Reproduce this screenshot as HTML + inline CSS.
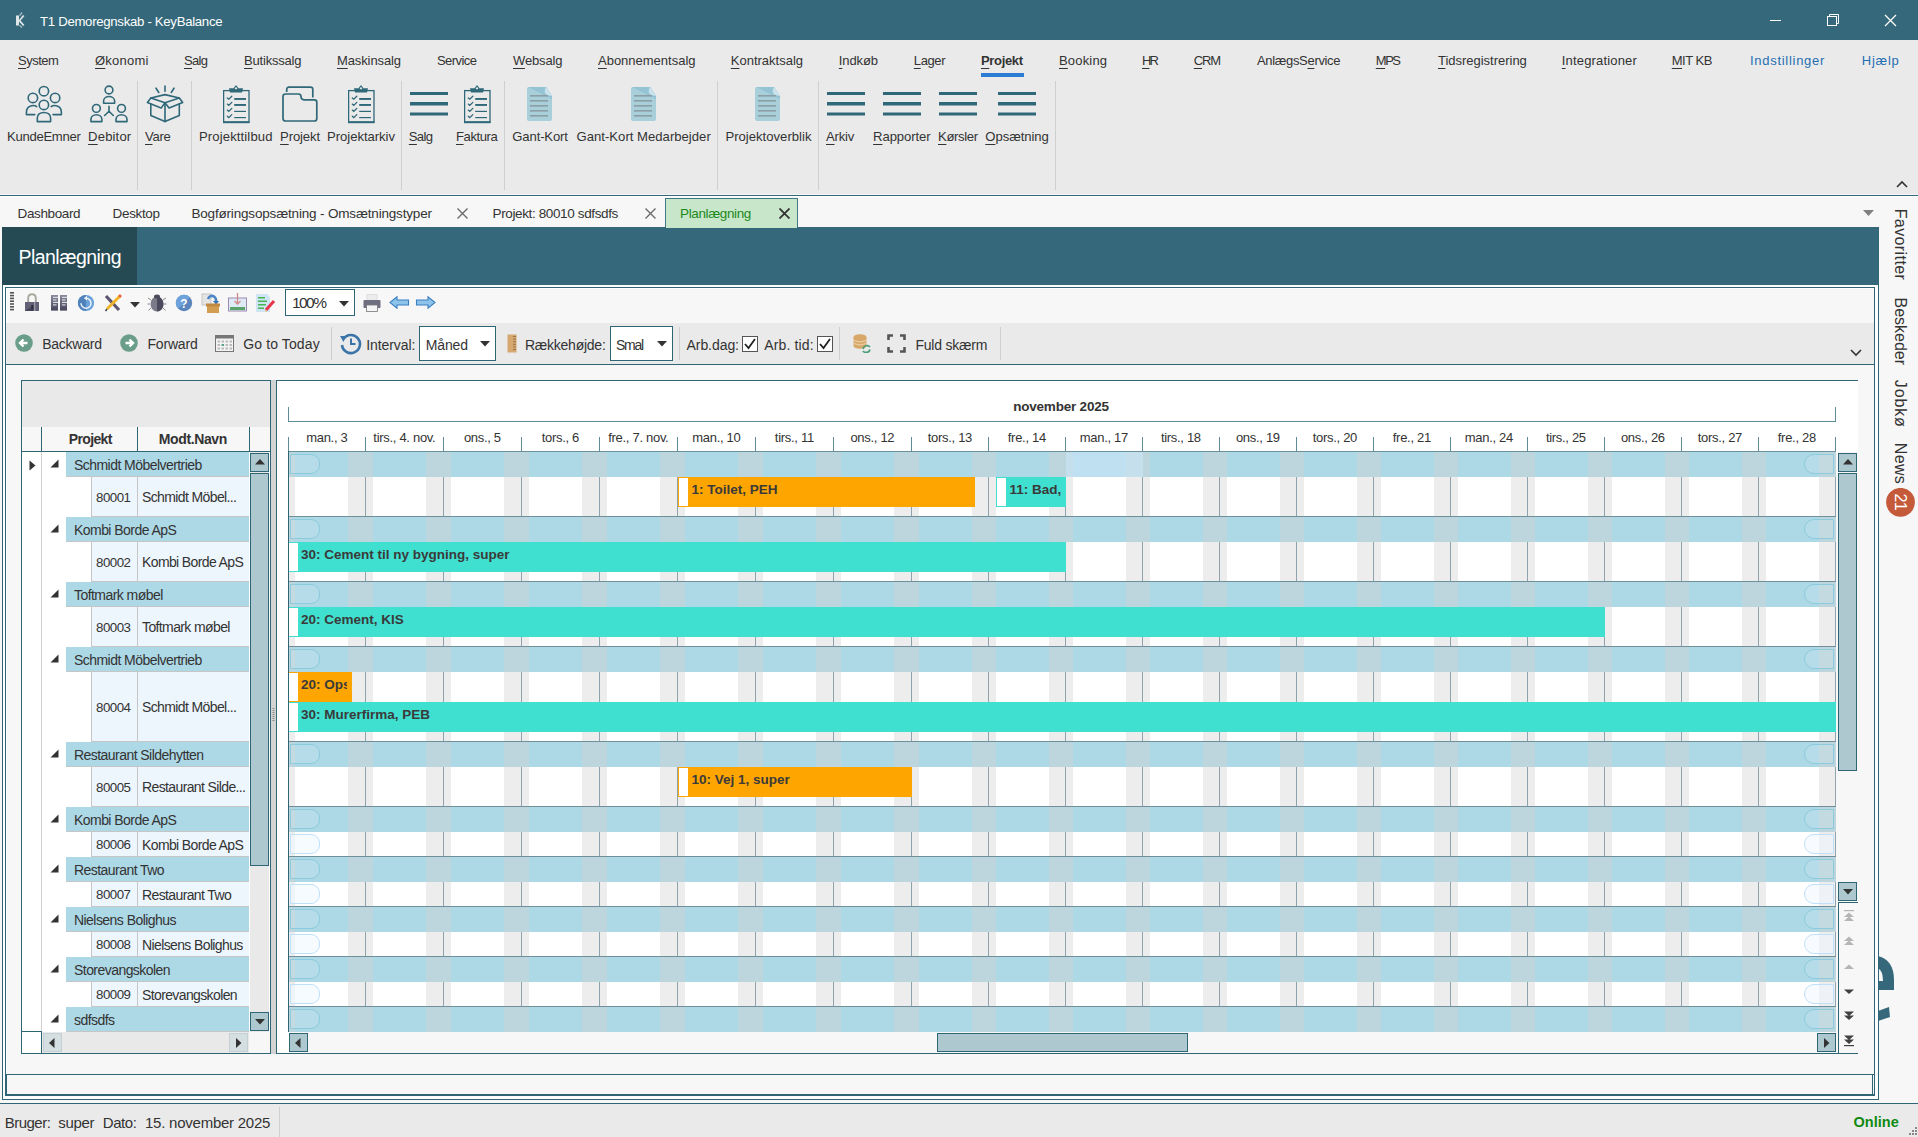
<!DOCTYPE html><html><head><meta charset="utf-8"><style>
html,body{margin:0;padding:0;}
body{width:1918px;height:1137px;position:relative;overflow:hidden;background:#f7f7f7;font-family:"Liberation Sans",sans-serif;}
body div{position:absolute;}
.t{position:absolute;white-space:nowrap;line-height:1;font-family:"Liberation Sans",sans-serif;}
u{text-decoration:underline;text-underline-offset:2.5px;text-decoration-thickness:1px;}
</style></head><body>
<div style="left:0px;top:0px;width:1918px;height:40px;background:#35687a;"></div>
<svg style="position:absolute;left:12px;top:11px;filter:blur(0.35px)" width="14" height="18" viewBox="0 0 14 18"><g fill="#dfe6e8"><path d="M4 4.5 L7 4.5 L7 9 L11 4 L12.5 5 L8.5 9.5 L12.5 14 L11 15 L7 10.5 L7 14.5 L4 14.5 Z"/><path d="M7 4.5 L9.5 1 L10.5 2 L8 5Z" opacity="0.7"/><path d="M7 14.5 L9.5 17 L10.5 16 L8 14Z" opacity="0.7"/></g></svg>
<span class="t" style="left:40.00px;top:14.78px;font-size:13.2px;letter-spacing:-0.298px;color:#ffffff;">T1 Demoregnskab - KeyBalance</span>
<div style="left:1770px;top:20px;width:11px;height:1px;background:#ffffff;"></div>
<svg style="position:absolute;left:1826px;top:13px;" width="14" height="14" viewBox="0 0 14 14"><rect x="1.5" y="3.5" width="9" height="9" fill="none" stroke="#fff" stroke-width="1"/><path d="M3.5 3.5 V1.5 H12.5 V10.5 H10.5" fill="none" stroke="#fff" stroke-width="1"/></svg>
<svg style="position:absolute;left:1884px;top:14px;" width="13" height="13" viewBox="0 0 13 13"><path d="M1 1 L12 12 M12 1 L1 12" stroke="#fff" stroke-width="1.3"/></svg>
<div style="left:0px;top:40px;width:1918px;height:154px;background:#eaeaea;"></div>
<span class="t" style="left:18.00px;top:53.75px;font-size:13px;letter-spacing:-0.508px;color:#333333;"><u>S</u>ystem</span>
<span class="t" style="left:95.00px;top:53.75px;font-size:13px;letter-spacing:0.231px;color:#333333;"><u>Ø</u>konomi</span>
<span class="t" style="left:184.00px;top:53.75px;font-size:13px;letter-spacing:-0.673px;color:#333333;"><u>S</u>alg</span>
<span class="t" style="left:244.00px;top:53.75px;font-size:13px;letter-spacing:-0.194px;color:#333333;"><u>B</u>utikssalg</span>
<span class="t" style="left:337.00px;top:53.75px;font-size:13px;letter-spacing:-0.114px;color:#333333;"><u>M</u>askinsalg</span>
<span class="t" style="left:437.00px;top:53.75px;font-size:13px;letter-spacing:-0.558px;color:#333333;">Service</span>
<span class="t" style="left:513.00px;top:53.75px;font-size:13px;letter-spacing:-0.140px;color:#333333;"><u>W</u>ebsalg</span>
<span class="t" style="left:598.00px;top:53.75px;font-size:13px;letter-spacing:-0.005px;color:#333333;"><u>A</u>bonnementsalg</span>
<span class="t" style="left:730.80px;top:53.75px;font-size:13px;letter-spacing:-0.005px;color:#333333;"><u>K</u>ontraktsalg</span>
<span class="t" style="left:838.80px;top:53.75px;font-size:13px;letter-spacing:-0.108px;color:#333333;"><u>I</u>ndkøb</span>
<span class="t" style="left:913.80px;top:53.75px;font-size:13px;letter-spacing:-0.386px;color:#333333;"><u>L</u>ager</span>
<span class="t" style="left:981.00px;top:53.75px;font-size:13px;letter-spacing:-0.345px;color:#333333;font-weight:bold;"><u>P</u>rojekt</span>
<span class="t" style="left:1059.00px;top:53.75px;font-size:13px;letter-spacing:0.171px;color:#333333;"><u>B</u>ooking</span>
<span class="t" style="left:1142.00px;top:53.75px;font-size:13px;letter-spacing:-1.977px;color:#333333;"><u>H</u>R</span>
<span class="t" style="left:1193.80px;top:53.75px;font-size:13px;letter-spacing:-1.203px;color:#333333;"><u>C</u>RM</span>
<span class="t" style="left:1257.00px;top:53.75px;font-size:13px;letter-spacing:-0.327px;color:#333333;">AnlægsS<u>e</u>rvice</span>
<span class="t" style="left:1375.80px;top:53.75px;font-size:13px;letter-spacing:-1.486px;color:#333333;"><u>M</u>PS</span>
<span class="t" style="left:1438.00px;top:53.75px;font-size:13px;letter-spacing:-0.020px;color:#333333;"><u>T</u>idsregistrering</span>
<span class="t" style="left:1561.80px;top:53.75px;font-size:13px;letter-spacing:0.168px;color:#333333;"><u>I</u>ntegrationer</span>
<span class="t" style="left:1671.80px;top:53.75px;font-size:13px;letter-spacing:-0.520px;color:#333333;"><u>M</u>IT KB</span>
<span class="t" style="left:1750.00px;top:53.75px;font-size:13px;letter-spacing:0.712px;color:#1f6fb2;">Indstillinger</span>
<span class="t" style="left:1861.80px;top:53.75px;font-size:13px;letter-spacing:0.761px;color:#1f6fb2;">Hjælp</span>
<div style="left:981px;top:73px;width:43px;height:4px;background:#2b7cd3;"></div>
<div style="left:137px;top:81px;width:1px;height:109px;background:#cfcfcf;"></div>
<div style="left:191px;top:81px;width:1px;height:109px;background:#cfcfcf;"></div>
<div style="left:401px;top:81px;width:1px;height:109px;background:#cfcfcf;"></div>
<div style="left:504px;top:81px;width:1px;height:109px;background:#cfcfcf;"></div>
<div style="left:717px;top:81px;width:1px;height:109px;background:#cfcfcf;"></div>
<div style="left:818px;top:81px;width:1px;height:109px;background:#cfcfcf;"></div>
<div style="left:1055px;top:81px;width:1px;height:109px;background:#cfcfcf;"></div>
<span class="t" style="left:7.00px;top:129.87px;font-size:13.1px;letter-spacing:-0.295px;color:#333333;">KundeEmner</span>
<span class="t" style="left:88.10px;top:129.87px;font-size:13.1px;letter-spacing:0.145px;color:#333333;"><u>D</u>ebitor</span>
<span class="t" style="left:145.00px;top:129.87px;font-size:13.1px;letter-spacing:-0.266px;color:#333333;"><u>V</u>are</span>
<span class="t" style="left:199.00px;top:129.87px;font-size:13.1px;letter-spacing:0.118px;color:#333333;">Projekttilbud</span>
<span class="t" style="left:280.10px;top:129.87px;font-size:13.1px;letter-spacing:-0.128px;color:#333333;"><u>P</u>rojekt</span>
<span class="t" style="left:327.10px;top:129.87px;font-size:13.1px;letter-spacing:-0.048px;color:#333333;">Projektarkiv</span>
<span class="t" style="left:408.80px;top:129.87px;font-size:13.1px;letter-spacing:-0.673px;color:#333333;"><u>S</u>alg</span>
<span class="t" style="left:456.00px;top:129.87px;font-size:13.1px;letter-spacing:-0.451px;color:#333333;"><u>F</u>aktura</span>
<span class="t" style="left:512.30px;top:129.87px;font-size:13.1px;letter-spacing:-0.136px;color:#333333;">Gant-Kort</span>
<span class="t" style="left:576.50px;top:129.87px;font-size:13.1px;letter-spacing:0.017px;color:#333333;">Gant-Kort Medarbejder</span>
<span class="t" style="left:725.40px;top:129.87px;font-size:13.1px;letter-spacing:0.014px;color:#333333;">Projektoverblik</span>
<span class="t" style="left:826.00px;top:129.87px;font-size:13.1px;letter-spacing:-0.228px;color:#333333;"><u>A</u>rkiv</span>
<span class="t" style="left:873.10px;top:129.87px;font-size:13.1px;letter-spacing:-0.081px;color:#333333;"><u>R</u>apporter</span>
<span class="t" style="left:938.00px;top:129.87px;font-size:13.1px;letter-spacing:-0.368px;color:#333333;"><u>K</u>ørsler</span>
<span class="t" style="left:985.30px;top:129.87px;font-size:13.1px;letter-spacing:-0.060px;color:#333333;"><u>O</u>psætning</span>
<svg style="position:absolute;left:24px;top:84px;" width="42" height="40" viewBox="0 0 42 40"><g fill="none" stroke="#2f6878" stroke-width="1.6" stroke-linejoin="round" stroke-linecap="round"><circle cx="19.9" cy="7.2" r="4.7"/><circle cx="8.9" cy="13.9" r="4.7"/><circle cx="31.1" cy="13.9" r="4.7"/><circle cx="19.9" cy="20.9" r="4.7"/><path d="M12.6 22.6 C10.5 20.8 2.4 20.6 2.4 28.5 V30.6 H10.8"/><path d="M27.2 22.6 C29.3 20.8 37.4 20.6 37.4 28.5 V30.6 H29"/><path d="M13.3 37.6 V34 C13.3 30.6 16 28.5 19.9 28.5 C23.8 28.5 26.6 30.6 26.6 34 V37.6 Z"/></g></svg>
<svg style="position:absolute;left:85px;top:80px;" width="50" height="48" viewBox="0 0 50 48"><g fill="none" stroke="#2f6878" stroke-width="1.6" stroke-linejoin="round" stroke-linecap="round"><circle cx="24" cy="10" r="3.9"/><path d="M18.6 23.2 V21 C18.6 18.4 21 16.5 24 16.5 C27 16.5 29.6 18.4 29.6 21 V23.2 Z"/><circle cx="11.4" cy="28.4" r="3.9"/><path d="M5.9 41.6 V39.5 C5.9 36.8 8.3 34.8 11.4 34.8 C14.5 34.8 16.9 36.8 16.9 39.5 V41.6 Z"/><circle cx="36.5" cy="28.4" r="3.9"/><path d="M31 41.6 V39.5 C31 36.8 33.4 34.8 36.5 34.8 C39.6 34.8 42 36.8 42 39.5 V41.6 Z"/><path d="M24 26.4 V31.2 L19.6 35.5 M24 31.2 L28.3 35.5"/></g></svg>
<svg style="position:absolute;left:140px;top:80px;" width="50" height="48" viewBox="0 0 50 48"><g fill="none" stroke="#2f6878" stroke-width="1.6" stroke-linejoin="round" stroke-linecap="round"><path d="M16 8.2 L18.8 12.5 M25 6 V11.3 M34 8.2 L31.25 12.5"/><path d="M10.8 18 L25 14.6 L39.3 18 L25 22.8 Z"/><path d="M10.8 18 L7.4 22.6 L21.1 28.1 L25 22.8"/><path d="M39.3 18 L42.7 22.6 L29.1 28.1 L25 22.8"/><path d="M10.8 23.9 V35.5 L25 41.6 L39.3 35.5 V23.9"/><path d="M25 22.8 V41.6"/></g></svg>
<svg style="position:absolute;left:223px;top:84px;" width="28" height="40" viewBox="0 0 28 40"><g><rect x="0.6" y="6.6" width="25.4" height="31.4" fill="none" stroke="#2f6878" stroke-width="1.3"/><rect x="0" y="37.4" width="26.6" height="1.8" fill="#2f6878"/><path d="M6 4.2 H20 L19 8.6 H7 Z" fill="#2f6878"/><path d="M10.3 4.4 L13 0.9 L15.7 4.4 Z" fill="#2f6878"/><circle cx="13" cy="4.3" r="1.1" fill="#eaeaea"/><g stroke="#2f6878" stroke-width="1.3" fill="none" stroke-linecap="round"><path d="M4.3 13.9 L5.8 15.2 L8.8 12.2"/><path d="M4.3 20.1 L5.8 21.4 L8.8 18.4"/><path d="M4.3 26.1 L5.8 27.4 L8.8 24.4"/><path d="M4.3 32.3 L5.8 33.6 L8.8 30.6"/></g><g fill="#2f6878"><rect x="11.2" y="14" width="11.8" height="1.9"/><rect x="11.2" y="20" width="11.8" height="1.9"/><rect x="11.2" y="26.8" width="11.8" height="1.2"/><rect x="11.2" y="33" width="11.8" height="1.2"/></g></g></svg>
<svg style="position:absolute;left:348px;top:84px;" width="28" height="40" viewBox="0 0 28 40"><g><rect x="0.6" y="6.6" width="25.4" height="31.4" fill="none" stroke="#2f6878" stroke-width="1.3"/><rect x="0" y="37.4" width="26.6" height="1.8" fill="#2f6878"/><path d="M6 4.2 H20 L19 8.6 H7 Z" fill="#2f6878"/><path d="M10.3 4.4 L13 0.9 L15.7 4.4 Z" fill="#2f6878"/><circle cx="13" cy="4.3" r="1.1" fill="#eaeaea"/><g stroke="#2f6878" stroke-width="1.3" fill="none" stroke-linecap="round"><path d="M4.3 13.9 L5.8 15.2 L8.8 12.2"/><path d="M4.3 20.1 L5.8 21.4 L8.8 18.4"/><path d="M4.3 26.1 L5.8 27.4 L8.8 24.4"/><path d="M4.3 32.3 L5.8 33.6 L8.8 30.6"/></g><g fill="#2f6878"><rect x="11.2" y="14" width="11.8" height="1.9"/><rect x="11.2" y="20" width="11.8" height="1.9"/><rect x="11.2" y="26.8" width="11.8" height="1.2"/><rect x="11.2" y="33" width="11.8" height="1.2"/></g></g></svg>
<svg style="position:absolute;left:464px;top:84px;" width="28" height="40" viewBox="0 0 28 40"><g><rect x="0.6" y="6.6" width="25.4" height="31.4" fill="none" stroke="#2f6878" stroke-width="1.3"/><rect x="0" y="37.4" width="26.6" height="1.8" fill="#2f6878"/><path d="M6 4.2 H20 L19 8.6 H7 Z" fill="#2f6878"/><path d="M10.3 4.4 L13 0.9 L15.7 4.4 Z" fill="#2f6878"/><circle cx="13" cy="4.3" r="1.1" fill="#eaeaea"/><g stroke="#2f6878" stroke-width="1.3" fill="none" stroke-linecap="round"><path d="M4.3 13.9 L5.8 15.2 L8.8 12.2"/><path d="M4.3 20.1 L5.8 21.4 L8.8 18.4"/><path d="M4.3 26.1 L5.8 27.4 L8.8 24.4"/><path d="M4.3 32.3 L5.8 33.6 L8.8 30.6"/></g><g fill="#2f6878"><rect x="11.2" y="14" width="11.8" height="1.9"/><rect x="11.2" y="20" width="11.8" height="1.9"/><rect x="11.2" y="26.8" width="11.8" height="1.2"/><rect x="11.2" y="33" width="11.8" height="1.2"/></g></g></svg>
<svg style="position:absolute;left:281px;top:85px;" width="38" height="38" viewBox="0 0 38 38"><g fill="none" stroke="#2f6878" stroke-width="1.7" stroke-linejoin="round"><path d="M5.7 7 V4.5 Q5.7 2.2 8 2.2 H29.5 Q31.8 2.2 31.8 4.5 V12.5"/><path d="M2 11.5 Q2 9 4.5 9 H17.5 Q20 9 20 11.5 Q20 14.8 23 14.8 H33.5 Q35.8 14.8 35.8 17.2 V33.5 Q35.8 36 33.5 36 H4.5 Q2 36 2 33.5 Z"/></g></svg>
<svg style="position:absolute;left:410px;top:91px;" width="38" height="27" viewBox="0 0 38 27"><g fill="#2f6878"><rect x="0" y="1" width="38" height="3"/><rect x="0" y="11" width="38" height="3.5"/><rect x="0" y="21.5" width="38" height="3"/></g></svg>
<svg style="position:absolute;left:827px;top:91px;" width="38" height="27" viewBox="0 0 38 27"><g fill="#2f6878"><rect x="0" y="1" width="38" height="3"/><rect x="0" y="11" width="38" height="3.5"/><rect x="0" y="21.5" width="38" height="3"/></g></svg>
<svg style="position:absolute;left:883px;top:91px;" width="38" height="27" viewBox="0 0 38 27"><g fill="#2f6878"><rect x="0" y="1" width="38" height="3"/><rect x="0" y="11" width="38" height="3.5"/><rect x="0" y="21.5" width="38" height="3"/></g></svg>
<svg style="position:absolute;left:939px;top:91px;" width="38" height="27" viewBox="0 0 38 27"><g fill="#2f6878"><rect x="0" y="1" width="38" height="3"/><rect x="0" y="11" width="38" height="3.5"/><rect x="0" y="21.5" width="38" height="3"/></g></svg>
<svg style="position:absolute;left:998px;top:91px;" width="38" height="27" viewBox="0 0 38 27"><g fill="#2f6878"><rect x="0" y="1" width="38" height="3"/><rect x="0" y="11" width="38" height="3.5"/><rect x="0" y="21.5" width="38" height="3"/></g></svg>
<svg style="position:absolute;left:526px;top:86px;" width="27" height="36" viewBox="0 0 27 36"><path d="M2 1 H20 L26 10 V33 Q26 35 24 35 H3 Q1 35 1 33 V3 Q1 1 3 1 Z" fill="#a9cfdb"/><path d="M2 1 H20 L26 10 V13 Z" fill="#8fc1d2" opacity="0.8"/><path d="M20 1 Q17 6 21 9 L26 10 Z" fill="#c8e3ec"/><g fill="#8a9ea4"><rect x="4" y="9" width="18" height="1.6"/><rect x="4" y="14" width="18" height="1.6"/><rect x="4" y="19" width="18" height="1.6"/><rect x="4" y="24" width="18" height="1.6"/><rect x="4" y="29" width="18" height="1.6"/></g></svg>
<svg style="position:absolute;left:630px;top:86px;" width="27" height="36" viewBox="0 0 27 36"><path d="M2 1 H20 L26 10 V33 Q26 35 24 35 H3 Q1 35 1 33 V3 Q1 1 3 1 Z" fill="#a9cfdb"/><path d="M2 1 H20 L26 10 V13 Z" fill="#8fc1d2" opacity="0.8"/><path d="M20 1 Q17 6 21 9 L26 10 Z" fill="#c8e3ec"/><g fill="#8a9ea4"><rect x="4" y="9" width="18" height="1.6"/><rect x="4" y="14" width="18" height="1.6"/><rect x="4" y="19" width="18" height="1.6"/><rect x="4" y="24" width="18" height="1.6"/><rect x="4" y="29" width="18" height="1.6"/></g></svg>
<svg style="position:absolute;left:754px;top:86px;" width="27" height="36" viewBox="0 0 27 36"><path d="M2 1 H20 L26 10 V33 Q26 35 24 35 H3 Q1 35 1 33 V3 Q1 1 3 1 Z" fill="#a9cfdb"/><path d="M2 1 H20 L26 10 V13 Z" fill="#8fc1d2" opacity="0.8"/><path d="M20 1 Q17 6 21 9 L26 10 Z" fill="#c8e3ec"/><g fill="#8a9ea4"><rect x="4" y="9" width="18" height="1.6"/><rect x="4" y="14" width="18" height="1.6"/><rect x="4" y="19" width="18" height="1.6"/><rect x="4" y="24" width="18" height="1.6"/><rect x="4" y="29" width="18" height="1.6"/></g></svg>
<div style="left:0px;top:195px;width:1918px;height:1px;background:#35687a;"></div>
<div style="left:0px;top:196px;width:1918px;height:1px;background:#ffffff;"></div>
<svg style="position:absolute;left:1896px;top:180px;" width="12" height="8" viewBox="0 0 12 8"><path d="M1 7 L6 2 L11 7" fill="none" stroke="#333" stroke-width="1.6"/></svg>
<div style="left:0px;top:197px;width:1918px;height:31px;background:#f7f7f7;"></div>
<span class="t" style="left:17.50px;top:206.83px;font-size:13.5px;letter-spacing:-0.367px;color:#333;">Dashboard</span>
<span class="t" style="left:112.60px;top:206.83px;font-size:13.5px;letter-spacing:-0.354px;color:#333;">Desktop</span>
<span class="t" style="left:191.40px;top:206.83px;font-size:13.5px;letter-spacing:-0.173px;color:#333;">Bogføringsopsætning - Omsætningstyper</span>
<svg style="position:absolute;left:457px;top:208px;" width="11" height="11" viewBox="0 0 11 11"><path d="M0.5 0.5 L10.5 10.5 M10.5 0.5 L0.5 10.5" stroke="#6b6b6b" stroke-width="1.4"/></svg>
<span class="t" style="left:492.50px;top:206.83px;font-size:13.5px;letter-spacing:-0.370px;color:#333;">Projekt: 80010 sdfsdfs</span>
<svg style="position:absolute;left:644.5px;top:208px;" width="11" height="11" viewBox="0 0 11 11"><path d="M0.5 0.5 L10.5 10.5 M10.5 0.5 L0.5 10.5" stroke="#6b6b6b" stroke-width="1.4"/></svg>
<div style="left:665px;top:198px;width:133px;height:30px;background:#c8e6c9;border:1px solid #3d7a86;border-bottom:none;box-sizing:border-box;"></div>
<span class="t" style="left:680.00px;top:206.83px;font-size:13.5px;letter-spacing:-0.375px;color:#1b8a1b;">Planlægning</span>
<svg style="position:absolute;left:778.5px;top:208px;" width="11" height="11" viewBox="0 0 11 11"><path d="M0.5 0.5 L10.5 10.5 M10.5 0.5 L0.5 10.5" stroke="#333" stroke-width="1.8"/></svg>
<svg style="position:absolute;left:1863px;top:210px;" width="12" height="7" viewBox="0 0 12 7"><path d="M0 0 H11 L5.5 6 Z" fill="#808080"/></svg>
<span class="t" style="left:1862.90px;top:234.82px;width:91.19999999999999px;font-size:16px;letter-spacing:0.404px;color:#333;transform-origin:35.60px 9.28px;transform:rotate(90deg);">Favoritter</span>
<span class="t" style="left:1864.75px;top:321.87px;width:87.5px;font-size:16px;letter-spacing:-0.013px;color:#333;transform-origin:33.75px 9.28px;transform:rotate(90deg);">Beskeder</span>
<span class="t" style="left:1875.00px;top:393.82px;width:67.0px;font-size:16px;letter-spacing:0.858px;color:#333;transform-origin:23.50px 9.28px;transform:rotate(90deg);">Jobkø</span>
<span class="t" style="left:1877.95px;top:454.07px;width:61.099999999999966px;font-size:16px;letter-spacing:0.364px;color:#333;transform-origin:20.55px 9.28px;transform:rotate(90deg);">News</span>
<svg style="position:absolute;left:1886px;top:488px;" width="30" height="30" viewBox="0 0 30 30"><circle cx="14.5" cy="14.3" r="14.4" fill="#c45a3a"/></svg>
<span class="t" style="left:1889.5px;top:495px;font-size:16px;color:#fff;transform-origin:9.5px 8px;transform:rotate(90deg);width:19px;letter-spacing:-0.6px">21</span>
<svg style="position:absolute;left:1878px;top:955px;" width="20" height="68" viewBox="0 0 20 68"><path d="M0 1 Q16 5 16 25 V35 H0 V26 H5 Q5 16 0 13 Z" fill="#35687a"/><path d="M0 56 L11 52 L12 62 L0 66 Z" fill="#35687a"/></svg>
<div style="left:2px;top:227px;width:1877px;height:58px;background:#35687a;"></div>
<div style="left:2px;top:227px;width:135px;height:58px;background:#254a53;"></div>
<span class="t" style="left:18.50px;top:248.23px;font-size:19.5px;letter-spacing:-0.541px;color:#ffffff;">Planlægning</span>
<div style="left:666px;top:227px;width:131px;height:1px;background:#c8e6c9;"></div>
<div style="left:2px;top:285px;width:1877px;height:815px;background:#ffffff;border:1px solid #2f6676;border-top:none;box-sizing:border-box;"></div>
<div style="left:5px;top:287px;width:1870px;height:809px;background:#f7f7f7;border:1px solid #2f6676;border-bottom:2px solid #2f6676;box-sizing:border-box;box-shadow:inset 1px 1px 0 #fff;"></div>
<div style="left:6px;top:323px;width:1868px;height:41px;background:#eaeaea;"></div>
<div style="left:6px;top:364px;width:1868px;height:1px;background:#2f6676;"></div>
<div style="left:6px;top:1074px;width:1868px;height:1px;background:#2f6676;"></div>
<div style="left:6px;top:1075px;width:1px;height:20px;background:#2f6676;"></div>
<div style="left:1872px;top:1075px;width:1px;height:20px;background:#2f6676;"></div>
<div style="left:0px;top:1103px;width:1918px;height:1px;background:#2f6676;"></div>
<div style="left:0px;top:1104px;width:1918px;height:33px;background:#eaeaea;"></div>
<span class="t" style="left:4.70px;top:1115.05px;font-size:15px;letter-spacing:-0.514px;color:#333;">Bruger:</span>
<span class="t" style="left:58.20px;top:1115.05px;font-size:15px;letter-spacing:-0.280px;color:#333;">super</span>
<span class="t" style="left:102.80px;top:1115.05px;font-size:15px;letter-spacing:-0.462px;color:#333;">Dato:</span>
<span class="t" style="left:145.00px;top:1115.05px;font-size:15px;letter-spacing:-0.240px;color:#333;">15. november 2025</span>
<div style="left:279px;top:1107px;width:1px;height:30px;background:#cfcfcf;"></div>
<span class="t" style="left:1853.50px;top:1115.08px;font-size:14.5px;letter-spacing:0.018px;color:#118a11;font-weight:bold;">Online</span>
<svg style="position:absolute;left:1906px;top:1126px;" width="12" height="11" viewBox="0 0 12 11"><g fill="#888"><rect x="9" y="1" width="2" height="2"/><rect x="6" y="4" width="2" height="2"/><rect x="9" y="4" width="2" height="2"/><rect x="3" y="7" width="2" height="2"/><rect x="6" y="7" width="2" height="2"/><rect x="9" y="7" width="2" height="2"/></g></svg>
<svg style="position:absolute;left:10px;top:292px;" width="5" height="21" viewBox="0 0 5 21"><g fill="#555"><rect x="0" y="0.0" width="4" height="1.6"/><rect x="0" y="2.8" width="4" height="1.6"/><rect x="0" y="5.6" width="4" height="1.6"/><rect x="0" y="8.4" width="4" height="1.6"/><rect x="0" y="11.2" width="4" height="1.6"/><rect x="0" y="14.0" width="4" height="1.6"/><rect x="0" y="16.8" width="4" height="1.6"/></g></svg>
<svg style="position:absolute;left:24px;top:293px;" width="16" height="19" viewBox="0 0 16 19"><path d="M4.2 9 V5.2 Q4.2 1.3 8 1.3 Q11.8 1.3 11.8 5.2 V9" fill="none" stroke="#a9a9a2" stroke-width="1.9"/><rect x="1" y="9" width="14" height="9" fill="#626077"/><rect x="10" y="9" width="1.3" height="9" fill="#9a98aa"/><path d="M1 18 L9.5 12.5 L9.5 18 Z" fill="#45435a"/><rect x="7.3" y="12" width="2" height="4.5" fill="#2e2d3a"/></svg>
<svg style="position:absolute;left:51px;top:295px;" width="17" height="16" viewBox="0 0 17 16"><defs><linearGradient id="cg" x1="0" y1="0" x2="0" y2="1"><stop offset="0" stop-color="#8a8a9c"/><stop offset="1" stop-color="#45445c"/></linearGradient></defs><rect x="0" y="0" width="7" height="15.6" fill="url(#cg)"/><rect x="9" y="0" width="7" height="15.6" fill="url(#cg)"/><g fill="#d9d9e0"><rect x="2" y="1.8" width="5" height="1.2"/><rect x="2" y="4.3" width="3.5" height="1.2"/><rect x="2" y="6.8" width="5" height="1.2"/><rect x="2" y="9.3" width="3.5" height="1.2"/><rect x="11" y="1.8" width="5" height="1.2"/><rect x="11" y="4.3" width="3.5" height="1.2"/><rect x="11" y="6.8" width="5" height="1.2"/><rect x="11" y="9.3" width="3.5" height="1.2"/></g></svg>
<svg style="position:absolute;left:77px;top:294px;" width="18" height="18" viewBox="0 0 18 18"><circle cx="9" cy="9" r="8.1" fill="#6ba2da"/><path d="M9 0.9 A8.1 8.1 0 0 0 9 17.1 L9 9 Z" fill="#4f82bb"/><path d="M4 9.2 A5 5 0 1 0 9 4.2" fill="none" stroke="#eef2f6" stroke-width="1.5"/><path d="M6.8 4.2 L10 1.8 L10 6.6 Z" fill="#eef2f6"/></svg>
<svg style="position:absolute;left:104px;top:294px;" width="18" height="18" viewBox="0 0 18 18"><path d="M2 2 L15 16" stroke="#5b5570" stroke-width="3.2"/><path d="M16 2 L3 15" stroke="#f0b429" stroke-width="3"/><path d="M15 1 L17 3" stroke="#e8633a" stroke-width="2.5"/><path d="M3 15 L1.5 17" stroke="#444" stroke-width="1.5"/></svg>
<svg style="position:absolute;left:130px;top:302px;" width="10" height="6" viewBox="0 0 10 6"><path d="M0 0 H10 L5 5.5 Z" fill="#333"/></svg>
<svg style="position:absolute;left:147px;top:293px;" width="20" height="19" viewBox="0 0 20 19"><g stroke="#888" stroke-width="1"><path d="M4 7 L1 5 M16 7 L19 5 M3 11 H0.5 M17 11 H19.5 M4 15 L1.5 17.5 M16 15 L18.5 17.5"/></g><ellipse cx="10" cy="11" rx="6.5" ry="7.5" fill="#7a7a88"/><path d="M10 3.5 A6.5 7.5 0 0 1 10 18.5 Z" fill="#4b4a5c"/><ellipse cx="10" cy="3.5" rx="3" ry="2" fill="#4b4a5c"/></svg>
<svg style="position:absolute;left:175px;top:294px;" width="18" height="18" viewBox="0 0 18 18"><circle cx="9" cy="9" r="8.2" fill="#5a86bd"/><path d="M3.2 14.8 A8.2 8.2 0 0 1 14.8 3.2 Z" fill="#6ea2dc"/><text x="9" y="13.5" text-anchor="middle" font-family="Liberation Sans" font-weight="bold" font-size="12" fill="#fff">?</text></svg>
<svg style="position:absolute;left:201px;top:293px;" width="20" height="20" viewBox="0 0 20 20"><rect x="1" y="1" width="9" height="11" fill="#e4e4e4" stroke="#bbb" stroke-width="0.8"/><path d="M7 6 Q9 1.5 13 3.5 Q15.5 5 15 9" stroke="#4a86c6" stroke-width="2.6" fill="none"/><path d="M12 8 L15 12 L18 8Z" fill="#3d76b8"/><rect x="6" y="12" width="12" height="8" fill="#d39d52"/><rect x="5" y="10.5" width="14" height="3" fill="#c08a45"/></svg>
<svg style="position:absolute;left:228px;top:293px;" width="20" height="19" viewBox="0 0 20 19"><rect x="0.5" y="5" width="18" height="13" fill="#dfeaf7" stroke="#9c8ab0" stroke-width="1"/><rect x="2" y="14" width="15" height="3" fill="#5aa36b"/><path d="M9.5 0 V11 M6.5 8 L9.5 11 L12.5 8" stroke="#d08a8a" stroke-width="1.3" fill="none"/></svg>
<svg style="position:absolute;left:255px;top:293px;" width="21" height="20" viewBox="0 0 21 20"><path d="M1 1 H12 L15 4 V19 H1 Z" fill="#cfe4f5"/><g fill="#46b554"><rect x="3" y="4" width="7" height="1.5"/><rect x="3" y="7.5" width="9" height="1.5"/><rect x="3" y="11" width="8" height="1.5"/><rect x="3" y="14.5" width="6" height="1.5"/></g><path d="M19 8 L11 17" stroke="#e8334a" stroke-width="3"/><path d="M11 17 L10 19 L12 18.5Z" fill="#f0c040"/></svg>
<div style="left:285px;top:289px;width:70px;height:27px;background:#ffffff;border:1px solid #2f6676;box-sizing:border-box;"></div>
<span class="t" style="left:291.90px;top:294.62px;font-size:15.5px;letter-spacing:-1.514px;color:#333;">100%</span>
<svg style="position:absolute;left:339px;top:301px;" width="10" height="6" viewBox="0 0 10 6"><path d="M0 0 H10 L5 5.5 Z" fill="#333"/></svg>
<svg style="position:absolute;left:363px;top:294px;" width="18" height="18" viewBox="0 0 18 18"><rect x="4" y="0.5" width="10" height="6" fill="#ececec" stroke="#ccc" stroke-width="0.5"/><rect x="0.5" y="6" width="17" height="8" rx="1" fill="#6f6f80"/><rect x="3.5" y="11" width="11" height="6.5" fill="#f5f5f5" stroke="#777" stroke-width="0.8"/></svg>
<svg style="position:absolute;left:389px;top:296px;" width="21" height="13" viewBox="0 0 21 13"><path d="M1 6.5 L8 0.8 V4 H19.5 V9 H8 V12.2 Z" fill="#8ec3ea" stroke="#3a7fc1" stroke-width="1.1"/></svg>
<svg style="position:absolute;left:415px;top:296px;" width="21" height="13" viewBox="0 0 21 13"><path d="M20 6.5 L13 0.8 V4 H1.5 V9 H13 V12.2 Z" fill="#8ec3ea" stroke="#3a7fc1" stroke-width="1.1"/></svg>
<svg style="position:absolute;left:15px;top:334px;" width="18" height="18" viewBox="0 0 18 18"><circle cx="9" cy="9" r="8.8" fill="#6b9e8a"/><path d="M12.5 9 H5.5 M8.5 5.5 L5 9 L8.5 12.5" stroke="#fff" stroke-width="2.4" fill="none"/></svg>
<span class="t" style="left:42.20px;top:337.10px;font-size:14px;letter-spacing:-0.238px;color:#333;">Backward</span>
<svg style="position:absolute;left:120px;top:334px;" width="18" height="18" viewBox="0 0 18 18"><circle cx="9" cy="9" r="8.8" fill="#6b9e8a"/><path d="M5.5 9 H12.5 M9.5 5.5 L13 9 L9.5 12.5" stroke="#fff" stroke-width="2.4" fill="none"/></svg>
<span class="t" style="left:147.50px;top:337.10px;font-size:14px;letter-spacing:-0.190px;color:#333;">Forward</span>
<svg style="position:absolute;left:215px;top:335px;" width="20" height="17" viewBox="0 0 20 17"><rect x="0.5" y="0.5" width="18" height="16" fill="#f3f3f3" stroke="#777" stroke-width="1"/><rect x="0.5" y="0.5" width="18" height="3" fill="#777"/><rect x="2.5" y="5.5" width="2.5" height="2" fill="#bbb"/><rect x="6.5" y="5.5" width="2.5" height="2" fill="#bbb"/><rect x="10.5" y="5.5" width="2.5" height="2" fill="#bbb"/><rect x="14.5" y="5.5" width="2.5" height="2" fill="#bbb"/><rect x="2.5" y="9.0" width="2.5" height="2" fill="#bbb"/><rect x="6.5" y="9.0" width="2.5" height="2" fill="#5aa58a"/><rect x="10.5" y="9.0" width="2.5" height="2" fill="#bbb"/><rect x="14.5" y="9.0" width="2.5" height="2" fill="#bbb"/><rect x="2.5" y="12.5" width="2.5" height="2" fill="#bbb"/><rect x="6.5" y="12.5" width="2.5" height="2" fill="#bbb"/><rect x="10.5" y="12.5" width="2.5" height="2" fill="#bbb"/><rect x="14.5" y="12.5" width="2.5" height="2" fill="#bbb"/></svg>
<span class="t" style="left:243.20px;top:337.10px;font-size:14px;letter-spacing:0.127px;color:#333;">Go to Today</span>
<div style="left:331px;top:327px;width:1px;height:33px;background:#cfcfcf;"></div>
<svg style="position:absolute;left:339px;top:332px;" width="23" height="23" viewBox="0 0 23 23"><path d="M4.5 7 A9 9 0 1 1 3 13" fill="none" stroke="#3b74a8" stroke-width="2.6"/><path d="M1 4 L7 4 L4.5 10 Z" fill="#3b74a8"/><path d="M12 6.5 V12 H16.5" stroke="#3b74a8" stroke-width="2" fill="none"/></svg>
<span class="t" style="left:366.20px;top:338.40px;font-size:14px;letter-spacing:-0.075px;color:#333;">Interval:</span>
<div style="left:419px;top:326px;width:77px;height:35px;background:#ffffff;border:1px solid #2f6676;box-sizing:border-box;"></div>
<span class="t" style="left:425.70px;top:338.40px;font-size:14px;letter-spacing:-0.126px;color:#333;">Måned</span>
<svg style="position:absolute;left:480px;top:341px;" width="10" height="6" viewBox="0 0 10 6"><path d="M0 0 H10 L5 5.5 Z" fill="#333"/></svg>
<svg style="position:absolute;left:507px;top:334px;" width="10" height="19" viewBox="0 0 10 19"><rect x="0.5" y="0.5" width="9" height="18" fill="#d6a86f"/><g fill="#9a7445"><rect x="6" y="2.0" width="3" height="1"/><rect x="6" y="4.6" width="3" height="1"/><rect x="6" y="7.2" width="3" height="1"/><rect x="6" y="9.8" width="3" height="1"/><rect x="6" y="12.4" width="3" height="1"/><rect x="6" y="15.0" width="3" height="1"/></g></svg>
<span class="t" style="left:525.00px;top:338.40px;font-size:14px;letter-spacing:-0.245px;color:#333;">Rækkehøjde:</span>
<div style="left:610px;top:326px;width:63px;height:35px;background:#ffffff;border:1px solid #2f6676;box-sizing:border-box;"></div>
<span class="t" style="left:616.00px;top:338.40px;font-size:14px;letter-spacing:-1.299px;color:#333;">Smal</span>
<svg style="position:absolute;left:656.5px;top:341px;" width="10" height="6" viewBox="0 0 10 6"><path d="M0 0 H10 L5 5.5 Z" fill="#333"/></svg>
<div style="left:679px;top:327px;width:1px;height:33px;background:#cfcfcf;"></div>
<span class="t" style="left:686.50px;top:338.40px;font-size:14px;letter-spacing:-0.060px;color:#333;">Arb.dag:</span>
<svg style="position:absolute;left:742px;top:336px;" width="16" height="16" viewBox="0 0 16 16"><rect x="0.5" y="0.5" width="15" height="15" fill="#fff" stroke="#555" stroke-width="1"/><path d="M3 8 L6.5 12 L13 3" stroke="#222" stroke-width="1.8" fill="none"/></svg>
<span class="t" style="left:764.20px;top:338.40px;font-size:14px;letter-spacing:0.145px;color:#333;">Arb. tid:</span>
<svg style="position:absolute;left:817px;top:336px;" width="16" height="16" viewBox="0 0 16 16"><rect x="0.5" y="0.5" width="15" height="15" fill="#fff" stroke="#555" stroke-width="1"/><path d="M3 8 L6.5 12 L13 3" stroke="#222" stroke-width="1.8" fill="none"/></svg>
<div style="left:839px;top:327px;width:1px;height:33px;background:#cfcfcf;"></div>
<svg style="position:absolute;left:853px;top:334px;" width="18" height="19" viewBox="0 0 18 19"><g fill="#d8a86a"><ellipse cx="7" cy="3" rx="6.5" ry="2.8"/><rect x="0.5" y="3" width="13" height="9"/><ellipse cx="7" cy="12" rx="6.5" ry="2.8"/></g><g stroke="#efd7b5" stroke-width="0.9" fill="none"><path d="M0.5 6.5 Q7 9.5 13.5 6.5"/><path d="M0.5 9.5 Q7 12.5 13.5 9.5"/></g><path d="M10 15 A4 4 0 0 1 17 13" stroke="#4e9e7a" stroke-width="1.8" fill="none"/><path d="M17 15.5 A4 4 0 0 1 10 17" stroke="#4e9e7a" stroke-width="1.8" fill="none"/></svg>
<svg style="position:absolute;left:887px;top:334px;" width="20" height="19" viewBox="0 0 20 19"><g fill="none" stroke="#555" stroke-width="2.6"><path d="M1.5 6 V1.5 H6"/><path d="M13 1.5 H17.5 V6"/><path d="M17.5 13 V17.5 H13"/><path d="M6 17.5 H1.5 V13"/></g></svg>
<span class="t" style="left:915.40px;top:338.40px;font-size:14px;letter-spacing:-0.199px;color:#333;">Fuld skærm</span>
<div style="left:1000px;top:327px;width:1px;height:33px;background:#cfcfcf;"></div>
<svg style="position:absolute;left:1850px;top:349px;" width="12" height="8" viewBox="0 0 12 8"><path d="M1 1 L6 6 L11 1" fill="none" stroke="#333" stroke-width="1.6"/></svg>
<div style="left:21px;top:380px;width:250px;height:674px;background:#ffffff;border:1px solid #2f6676;box-sizing:border-box;"></div>
<div style="left:22px;top:381px;width:248px;height:46px;background:#e9e9e9;"></div>
<div style="left:22px;top:427px;width:248px;height:24px;background:#f7f7f7;"></div>
<div style="left:22px;top:451px;width:248px;height:1px;background:#2f6676;"></div>
<div style="left:41px;top:427px;width:1px;height:24px;background:#2f6676;"></div>
<div style="left:137px;top:427px;width:1px;height:24px;background:#2f6676;"></div>
<div style="left:249px;top:427px;width:1px;height:24px;background:#2f6676;"></div>
<span class="t" style="left:68.80px;top:432.30px;font-size:14px;letter-spacing:-0.660px;color:#333;font-weight:bold;">Projekt</span>
<span class="t" style="left:158.80px;top:432.30px;font-size:14px;letter-spacing:-0.381px;color:#333;font-weight:bold;">Modt.Navn</span>
<div style="left:41px;top:452px;width:1px;height:580px;background:#d0d0d0;"></div>
<div style="left:66px;top:452px;width:183px;height:24px;background:#add8e6;"></div>
<div style="left:66px;top:476px;width:183px;height:1px;background:#c6c6c6;"></div>
<svg style="position:absolute;left:50px;top:459px;" width="9" height="9" viewBox="0 0 9 9"><path d="M8.5 0.5 V8.5 H0.5 Z" fill="#333"/></svg>
<span class="t" style="left:74.00px;top:457.70px;font-size:14px;letter-spacing:0.000px;color:#333;letter-spacing:-0.55px">Schmidt Möbelvertrieb</span>
<div style="left:91px;top:477px;width:158px;height:39px;background:#eef6fd;"></div>
<div style="left:91px;top:516px;width:158px;height:1px;background:#c6c6c6;"></div>
<div style="left:91px;top:477px;width:1px;height:40px;background:#c6c6c6;"></div>
<div style="left:137px;top:477px;width:1px;height:40px;background:#c6c6c6;"></div>
<span class="t" style="left:96.10px;top:490.69px;font-size:13.3px;letter-spacing:-0.545px;color:#333;">80001</span>
<span class="t" style="left:142.00px;top:490.10px;font-size:14px;letter-spacing:0.000px;color:#333;letter-spacing:-0.62px">Schmidt Möbel...</span>
<div style="left:66px;top:517px;width:183px;height:24px;background:#add8e6;"></div>
<div style="left:66px;top:541px;width:183px;height:1px;background:#c6c6c6;"></div>
<svg style="position:absolute;left:50px;top:524px;" width="9" height="9" viewBox="0 0 9 9"><path d="M8.5 0.5 V8.5 H0.5 Z" fill="#333"/></svg>
<span class="t" style="left:74.00px;top:522.70px;font-size:14px;letter-spacing:0.000px;color:#333;letter-spacing:-0.55px">Kombi Borde ApS</span>
<div style="left:91px;top:542px;width:158px;height:39px;background:#eef6fd;"></div>
<div style="left:91px;top:581px;width:158px;height:1px;background:#c6c6c6;"></div>
<div style="left:91px;top:542px;width:1px;height:40px;background:#c6c6c6;"></div>
<div style="left:137px;top:542px;width:1px;height:40px;background:#c6c6c6;"></div>
<span class="t" style="left:96.10px;top:555.70px;font-size:13.3px;letter-spacing:-0.545px;color:#333;">80002</span>
<span class="t" style="left:142.00px;top:555.10px;font-size:14px;letter-spacing:0.000px;color:#333;letter-spacing:-0.62px">Kombi Borde ApS</span>
<div style="left:66px;top:582px;width:183px;height:24px;background:#add8e6;"></div>
<div style="left:66px;top:606px;width:183px;height:1px;background:#c6c6c6;"></div>
<svg style="position:absolute;left:50px;top:589px;" width="9" height="9" viewBox="0 0 9 9"><path d="M8.5 0.5 V8.5 H0.5 Z" fill="#333"/></svg>
<span class="t" style="left:74.00px;top:587.70px;font-size:14px;letter-spacing:0.000px;color:#333;letter-spacing:-0.55px">Toftmark møbel</span>
<div style="left:91px;top:607px;width:158px;height:39px;background:#eef6fd;"></div>
<div style="left:91px;top:646px;width:158px;height:1px;background:#c6c6c6;"></div>
<div style="left:91px;top:607px;width:1px;height:40px;background:#c6c6c6;"></div>
<div style="left:137px;top:607px;width:1px;height:40px;background:#c6c6c6;"></div>
<span class="t" style="left:96.10px;top:620.70px;font-size:13.3px;letter-spacing:-0.545px;color:#333;">80003</span>
<span class="t" style="left:142.00px;top:620.10px;font-size:14px;letter-spacing:0.000px;color:#333;letter-spacing:-0.62px">Toftmark møbel</span>
<div style="left:66px;top:647px;width:183px;height:24px;background:#add8e6;"></div>
<div style="left:66px;top:671px;width:183px;height:1px;background:#c6c6c6;"></div>
<svg style="position:absolute;left:50px;top:654px;" width="9" height="9" viewBox="0 0 9 9"><path d="M8.5 0.5 V8.5 H0.5 Z" fill="#333"/></svg>
<span class="t" style="left:74.00px;top:652.70px;font-size:14px;letter-spacing:0.000px;color:#333;letter-spacing:-0.55px">Schmidt Möbelvertrieb</span>
<div style="left:91px;top:672px;width:158px;height:69px;background:#eef6fd;"></div>
<div style="left:91px;top:741px;width:158px;height:1px;background:#c6c6c6;"></div>
<div style="left:91px;top:672px;width:1px;height:70px;background:#c6c6c6;"></div>
<div style="left:137px;top:672px;width:1px;height:70px;background:#c6c6c6;"></div>
<span class="t" style="left:96.10px;top:700.70px;font-size:13.3px;letter-spacing:-0.545px;color:#333;">80004</span>
<span class="t" style="left:142.00px;top:700.10px;font-size:14px;letter-spacing:0.000px;color:#333;letter-spacing:-0.62px">Schmidt Möbel...</span>
<div style="left:66px;top:742px;width:183px;height:24px;background:#add8e6;"></div>
<div style="left:66px;top:766px;width:183px;height:1px;background:#c6c6c6;"></div>
<svg style="position:absolute;left:50px;top:749px;" width="9" height="9" viewBox="0 0 9 9"><path d="M8.5 0.5 V8.5 H0.5 Z" fill="#333"/></svg>
<span class="t" style="left:74.00px;top:747.70px;font-size:14px;letter-spacing:0.000px;color:#333;letter-spacing:-0.55px">Restaurant Sildehytten</span>
<div style="left:91px;top:767px;width:158px;height:39px;background:#eef6fd;"></div>
<div style="left:91px;top:806px;width:158px;height:1px;background:#c6c6c6;"></div>
<div style="left:91px;top:767px;width:1px;height:40px;background:#c6c6c6;"></div>
<div style="left:137px;top:767px;width:1px;height:40px;background:#c6c6c6;"></div>
<span class="t" style="left:96.10px;top:780.70px;font-size:13.3px;letter-spacing:-0.545px;color:#333;">80005</span>
<span class="t" style="left:142.00px;top:780.10px;font-size:14px;letter-spacing:0.000px;color:#333;letter-spacing:-0.62px">Restaurant Silde...</span>
<div style="left:66px;top:807px;width:183px;height:24px;background:#add8e6;"></div>
<div style="left:66px;top:831px;width:183px;height:1px;background:#c6c6c6;"></div>
<svg style="position:absolute;left:50px;top:814px;" width="9" height="9" viewBox="0 0 9 9"><path d="M8.5 0.5 V8.5 H0.5 Z" fill="#333"/></svg>
<span class="t" style="left:74.00px;top:812.70px;font-size:14px;letter-spacing:0.000px;color:#333;letter-spacing:-0.55px">Kombi Borde ApS</span>
<div style="left:91px;top:832px;width:158px;height:24px;background:#eef6fd;"></div>
<div style="left:91px;top:856px;width:158px;height:1px;background:#c6c6c6;"></div>
<div style="left:91px;top:832px;width:1px;height:25px;background:#c6c6c6;"></div>
<div style="left:137px;top:832px;width:1px;height:25px;background:#c6c6c6;"></div>
<span class="t" style="left:96.10px;top:838.20px;font-size:13.3px;letter-spacing:-0.545px;color:#333;">80006</span>
<span class="t" style="left:142.00px;top:837.60px;font-size:14px;letter-spacing:0.000px;color:#333;letter-spacing:-0.62px">Kombi Borde ApS</span>
<div style="left:66px;top:857px;width:183px;height:24px;background:#add8e6;"></div>
<div style="left:66px;top:881px;width:183px;height:1px;background:#c6c6c6;"></div>
<svg style="position:absolute;left:50px;top:864px;" width="9" height="9" viewBox="0 0 9 9"><path d="M8.5 0.5 V8.5 H0.5 Z" fill="#333"/></svg>
<span class="t" style="left:74.00px;top:862.70px;font-size:14px;letter-spacing:0.000px;color:#333;letter-spacing:-0.55px">Restaurant Two</span>
<div style="left:91px;top:882px;width:158px;height:24px;background:#eef6fd;"></div>
<div style="left:91px;top:906px;width:158px;height:1px;background:#c6c6c6;"></div>
<div style="left:91px;top:882px;width:1px;height:25px;background:#c6c6c6;"></div>
<div style="left:137px;top:882px;width:1px;height:25px;background:#c6c6c6;"></div>
<span class="t" style="left:96.10px;top:888.20px;font-size:13.3px;letter-spacing:-0.545px;color:#333;">80007</span>
<span class="t" style="left:142.00px;top:887.60px;font-size:14px;letter-spacing:0.000px;color:#333;letter-spacing:-0.62px">Restaurant Two</span>
<div style="left:66px;top:907px;width:183px;height:24px;background:#add8e6;"></div>
<div style="left:66px;top:931px;width:183px;height:1px;background:#c6c6c6;"></div>
<svg style="position:absolute;left:50px;top:914px;" width="9" height="9" viewBox="0 0 9 9"><path d="M8.5 0.5 V8.5 H0.5 Z" fill="#333"/></svg>
<span class="t" style="left:74.00px;top:912.70px;font-size:14px;letter-spacing:0.000px;color:#333;letter-spacing:-0.55px">Nielsens Bolighus</span>
<div style="left:91px;top:932px;width:158px;height:24px;background:#eef6fd;"></div>
<div style="left:91px;top:956px;width:158px;height:1px;background:#c6c6c6;"></div>
<div style="left:91px;top:932px;width:1px;height:25px;background:#c6c6c6;"></div>
<div style="left:137px;top:932px;width:1px;height:25px;background:#c6c6c6;"></div>
<span class="t" style="left:96.10px;top:938.20px;font-size:13.3px;letter-spacing:-0.545px;color:#333;">80008</span>
<span class="t" style="left:142.00px;top:937.60px;font-size:14px;letter-spacing:0.000px;color:#333;letter-spacing:-0.62px">Nielsens Bolighus</span>
<div style="left:66px;top:957px;width:183px;height:24px;background:#add8e6;"></div>
<div style="left:66px;top:981px;width:183px;height:1px;background:#c6c6c6;"></div>
<svg style="position:absolute;left:50px;top:964px;" width="9" height="9" viewBox="0 0 9 9"><path d="M8.5 0.5 V8.5 H0.5 Z" fill="#333"/></svg>
<span class="t" style="left:74.00px;top:962.70px;font-size:14px;letter-spacing:0.000px;color:#333;letter-spacing:-0.55px">Storevangskolen</span>
<div style="left:91px;top:982px;width:158px;height:24px;background:#eef6fd;"></div>
<div style="left:91px;top:1006px;width:158px;height:1px;background:#c6c6c6;"></div>
<div style="left:91px;top:982px;width:1px;height:25px;background:#c6c6c6;"></div>
<div style="left:137px;top:982px;width:1px;height:25px;background:#c6c6c6;"></div>
<span class="t" style="left:96.10px;top:988.20px;font-size:13.3px;letter-spacing:-0.545px;color:#333;">80009</span>
<span class="t" style="left:142.00px;top:987.60px;font-size:14px;letter-spacing:0.000px;color:#333;letter-spacing:-0.62px">Storevangskolen</span>
<div style="left:66px;top:1007px;width:183px;height:24px;background:#add8e6;"></div>
<div style="left:66px;top:1031px;width:183px;height:1px;background:#c6c6c6;"></div>
<svg style="position:absolute;left:50px;top:1014px;" width="9" height="9" viewBox="0 0 9 9"><path d="M8.5 0.5 V8.5 H0.5 Z" fill="#333"/></svg>
<span class="t" style="left:74.00px;top:1012.70px;font-size:14px;letter-spacing:0.000px;color:#333;letter-spacing:-0.55px">sdfsdfs</span>
<svg style="position:absolute;left:29px;top:460px;" width="7" height="11" viewBox="0 0 7 11"><path d="M0.5 0.5 L6.5 5.5 L0.5 10.5 Z" fill="#333"/></svg>
<div style="left:250px;top:452px;width:19px;height:580px;background:#e9e9e9;"></div>
<div style="left:250px;top:453px;width:19px;height:19px;background:#adc9cf;border:1.5px solid #2f6676;box-sizing:border-box;"></div>
<svg style="position:absolute;left:254.5px;top:459.0px;" width="10" height="6" viewBox="0 0 10 6"><path d="M0 5.5 H10 L5 0 Z" fill="#333"/></svg>
<div style="left:250px;top:473px;width:19px;height:393px;background:#adc9cf;border:1.5px solid #2f6676;box-sizing:border-box;"></div>
<div style="left:250px;top:1012px;width:19px;height:19px;background:#adc9cf;border:1.5px solid #2f6676;box-sizing:border-box;"></div>
<svg style="position:absolute;left:254.5px;top:1019.0px;" width="10" height="6" viewBox="0 0 10 6"><path d="M0 0 H10 L5 5.5 Z" fill="#333"/></svg>
<div style="left:22px;top:1032px;width:19px;height:21px;background:#ffffff;"></div>
<div style="left:41px;top:1032px;width:1px;height:22px;background:#2f6676;"></div>
<div style="left:22px;top:1031px;width:20px;height:1px;background:#2f6676;"></div>
<div style="left:42px;top:1032px;width:207px;height:21px;background:#e9e9e9;"></div>
<div style="left:249px;top:1032px;width:21px;height:21px;background:#f7f7f7;"></div>
<div style="left:43px;top:1033px;width:19px;height:19px;background:#d5dfe2;border:1.5px solid #c3d0d4;box-sizing:border-box;"></div>
<svg style="position:absolute;left:49.0px;top:1037.5px;" width="6" height="10" viewBox="0 0 6 10"><path d="M5.5 0 V10 L0 5 Z" fill="#333"/></svg>
<div style="left:229px;top:1033px;width:19px;height:19px;background:#d5dfe2;border:1.5px solid #c3d0d4;box-sizing:border-box;"></div>
<svg style="position:absolute;left:236.0px;top:1037.5px;" width="6" height="10" viewBox="0 0 6 10"><path d="M0 0 V10 L5.5 5 Z" fill="#333"/></svg>
<div style="left:271px;top:380px;width:5px;height:674px;background:#d3d3d3;"></div>
<svg style="position:absolute;left:272px;top:708px;" width="3" height="14" viewBox="0 0 3 14"><g fill="#888"><rect x="0.5" y="0" width="2" height="1"/><rect x="0.5" y="2" width="2" height="1"/><rect x="0.5" y="4" width="2" height="1"/><rect x="0.5" y="6" width="2" height="1"/><rect x="0.5" y="8" width="2" height="1"/><rect x="0.5" y="10" width="2" height="1"/><rect x="0.5" y="12" width="2" height="1"/></g></svg>
<div style="left:276px;top:380px;width:1582px;height:674px;background:#ffffff;border-left:1px solid #2f6676;border-top:1px solid #2f6676;box-sizing:border-box;"></div>
<span class="t" style="left:1013.20px;top:399.82px;font-size:13.5px;letter-spacing:-0.208px;color:#333;font-weight:bold;">november 2025</span>
<div style="left:288px;top:407px;width:1px;height:15px;background:#5f8a97;"></div>
<div style="left:1835px;top:407px;width:1px;height:15px;background:#5f8a97;"></div>
<div style="left:288px;top:421px;width:1548px;height:1px;background:#5f8a97;"></div>
<div style="left:288px;top:437px;width:1px;height:15px;background:#5f8a97;"></div>
<div style="left:365px;top:437px;width:1px;height:15px;background:#5f8a97;"></div>
<div style="left:443px;top:437px;width:1px;height:15px;background:#5f8a97;"></div>
<div style="left:521px;top:437px;width:1px;height:15px;background:#5f8a97;"></div>
<div style="left:599px;top:437px;width:1px;height:15px;background:#5f8a97;"></div>
<div style="left:677px;top:437px;width:1px;height:15px;background:#5f8a97;"></div>
<div style="left:755px;top:437px;width:1px;height:15px;background:#5f8a97;"></div>
<div style="left:833px;top:437px;width:1px;height:15px;background:#5f8a97;"></div>
<div style="left:911px;top:437px;width:1px;height:15px;background:#5f8a97;"></div>
<div style="left:988px;top:437px;width:1px;height:15px;background:#5f8a97;"></div>
<div style="left:1065px;top:437px;width:1px;height:15px;background:#5f8a97;"></div>
<div style="left:1142px;top:437px;width:1px;height:15px;background:#5f8a97;"></div>
<div style="left:1219px;top:437px;width:1px;height:15px;background:#5f8a97;"></div>
<div style="left:1296px;top:437px;width:1px;height:15px;background:#5f8a97;"></div>
<div style="left:1373px;top:437px;width:1px;height:15px;background:#5f8a97;"></div>
<div style="left:1450px;top:437px;width:1px;height:15px;background:#5f8a97;"></div>
<div style="left:1527px;top:437px;width:1px;height:15px;background:#5f8a97;"></div>
<div style="left:1604px;top:437px;width:1px;height:15px;background:#5f8a97;"></div>
<div style="left:1681px;top:437px;width:1px;height:15px;background:#5f8a97;"></div>
<div style="left:1758px;top:437px;width:1px;height:15px;background:#5f8a97;"></div>
<div style="left:1835px;top:437px;width:1px;height:15px;background:#5f8a97;"></div>
<span class="t" style="left:306.22px;top:430.95px;font-size:13px;letter-spacing:-0.300px;color:#333;">man., 3</span>
<span class="t" style="left:373.34px;top:430.95px;font-size:13px;letter-spacing:-0.300px;color:#333;">tirs., 4. nov.</span>
<span class="t" style="left:463.89px;top:430.95px;font-size:13px;letter-spacing:-0.300px;color:#333;">ons., 5</span>
<span class="t" style="left:541.68px;top:430.95px;font-size:13px;letter-spacing:-0.300px;color:#333;">tors., 6</span>
<span class="t" style="left:608.27px;top:430.95px;font-size:13px;letter-spacing:-0.300px;color:#333;">fre., 7. nov.</span>
<span class="t" style="left:692.26px;top:430.95px;font-size:13px;letter-spacing:-0.300px;color:#333;">man., 10</span>
<span class="t" style="left:774.87px;top:430.95px;font-size:13px;letter-spacing:-0.300px;color:#333;">tirs., 11</span>
<span class="t" style="left:850.42px;top:430.95px;font-size:13px;letter-spacing:-0.300px;color:#333;">ons., 12</span>
<span class="t" style="left:927.72px;top:430.95px;font-size:13px;letter-spacing:-0.300px;color:#333;">tors., 13</span>
<span class="t" style="left:1007.82px;top:430.95px;font-size:13px;letter-spacing:-0.300px;color:#333;">fre., 14</span>
<span class="t" style="left:1079.76px;top:430.95px;font-size:13px;letter-spacing:-0.300px;color:#333;">man., 17</span>
<span class="t" style="left:1160.89px;top:430.95px;font-size:13px;letter-spacing:-0.300px;color:#333;">tirs., 18</span>
<span class="t" style="left:1235.92px;top:430.95px;font-size:13px;letter-spacing:-0.300px;color:#333;">ons., 19</span>
<span class="t" style="left:1312.72px;top:430.95px;font-size:13px;letter-spacing:-0.300px;color:#333;">tors., 20</span>
<span class="t" style="left:1392.82px;top:430.95px;font-size:13px;letter-spacing:-0.300px;color:#333;">fre., 21</span>
<span class="t" style="left:1464.76px;top:430.95px;font-size:13px;letter-spacing:-0.300px;color:#333;">man., 24</span>
<span class="t" style="left:1545.89px;top:430.95px;font-size:13px;letter-spacing:-0.300px;color:#333;">tirs., 25</span>
<span class="t" style="left:1620.92px;top:430.95px;font-size:13px;letter-spacing:-0.300px;color:#333;">ons., 26</span>
<span class="t" style="left:1697.72px;top:430.95px;font-size:13px;letter-spacing:-0.300px;color:#333;">tors., 27</span>
<span class="t" style="left:1777.82px;top:430.95px;font-size:13px;letter-spacing:-0.300px;color:#333;">fre., 28</span>
<div style="left:288px;top:451px;width:1548px;height:1px;background:#6a929c;"></div>
<div style="left:288px;top:451px;width:1px;height:581px;background:#2f6676;"></div>
<div style="left:289px;top:452px;width:1547px;height:25px;background:linear-gradient(to right,#bdd6de -1px,#bdd6de 6px,#add8e6 6px,#add8e6 59px,#bdd6de 59px,#bdd6de 76px,#bdd6de 84px,#add8e6 84px,#add8e6 137px,#bdd6de 137px,#bdd6de 154px,#bdd6de 162px,#add8e6 162px,#add8e6 215px,#bdd6de 215px,#bdd6de 232px,#bdd6de 240px,#add8e6 240px,#add8e6 293px,#bdd6de 293px,#bdd6de 310px,#bdd6de 318px,#add8e6 318px,#add8e6 371px,#bdd6de 371px,#bdd6de 388px,#bdd6de 396px,#add8e6 396px,#add8e6 449px,#bdd6de 449px,#bdd6de 466px,#bdd6de 474px,#add8e6 474px,#add8e6 527px,#bdd6de 527px,#bdd6de 544px,#bdd6de 552px,#add8e6 552px,#add8e6 605px,#bdd6de 605px,#bdd6de 622px,#bdd6de 630px,#add8e6 630px,#add8e6 683px,#bdd6de 683px,#bdd6de 699px,#bdd6de 707px,#add8e6 707px,#add8e6 760px,#bdd6de 760px,#bdd6de 776px,#bdd6de 784px,#add8e6 784px,#add8e6 837px,#bdd6de 837px,#bdd6de 853px,#bdd6de 861px,#add8e6 861px,#add8e6 914px,#bdd6de 914px,#bdd6de 930px,#bdd6de 938px,#add8e6 938px,#add8e6 991px,#bdd6de 991px,#bdd6de 1007px,#bdd6de 1015px,#add8e6 1015px,#add8e6 1068px,#bdd6de 1068px,#bdd6de 1084px,#bdd6de 1092px,#add8e6 1092px,#add8e6 1145px,#bdd6de 1145px,#bdd6de 1161px,#bdd6de 1169px,#add8e6 1169px,#add8e6 1222px,#bdd6de 1222px,#bdd6de 1238px,#bdd6de 1246px,#add8e6 1246px,#add8e6 1299px,#bdd6de 1299px,#bdd6de 1315px,#bdd6de 1323px,#add8e6 1323px,#add8e6 1376px,#bdd6de 1376px,#bdd6de 1392px,#bdd6de 1400px,#add8e6 1400px,#add8e6 1453px,#bdd6de 1453px,#bdd6de 1469px,#bdd6de 1477px,#add8e6 1477px,#add8e6 1530px,#bdd6de 1530px,#bdd6de 1547px);"></div>
<div style="left:290px;top:454px;width:30px;height:20px;border:1px solid #8ccbdd;border-radius:0 9px 9px 0;background:rgba(255,255,255,0.1);box-sizing:border-box"></div>
<div style="left:1804px;top:454px;width:30px;height:20px;border:1px solid #8ccbdd;border-right:1px solid #8ccbdd;border-radius:10px 0 0 10px;background:rgba(255,255,255,0.1);box-sizing:border-box"></div>
<div style="left:289px;top:477px;width:1547px;height:39px;background:linear-gradient(to right,#ededed -1px,#ededed 6px,#ffffff 6px,#ffffff 59px,#ededed 59px,#ededed 76px,#ededed 84px,#ffffff 84px,#ffffff 137px,#ededed 137px,#ededed 154px,#ededed 162px,#ffffff 162px,#ffffff 215px,#ededed 215px,#ededed 232px,#ededed 240px,#ffffff 240px,#ffffff 293px,#ededed 293px,#ededed 310px,#ededed 318px,#ffffff 318px,#ffffff 371px,#ededed 371px,#ededed 388px,#ededed 396px,#ffffff 396px,#ffffff 449px,#ededed 449px,#ededed 466px,#ededed 474px,#ffffff 474px,#ffffff 527px,#ededed 527px,#ededed 544px,#ededed 552px,#ffffff 552px,#ffffff 605px,#ededed 605px,#ededed 622px,#ededed 630px,#ffffff 630px,#ffffff 683px,#ededed 683px,#ededed 699px,#ededed 707px,#ffffff 707px,#ffffff 760px,#ededed 760px,#ededed 776px,#ededed 784px,#ffffff 784px,#ffffff 837px,#ededed 837px,#ededed 853px,#ededed 861px,#ffffff 861px,#ffffff 914px,#ededed 914px,#ededed 930px,#ededed 938px,#ffffff 938px,#ffffff 991px,#ededed 991px,#ededed 1007px,#ededed 1015px,#ffffff 1015px,#ffffff 1068px,#ededed 1068px,#ededed 1084px,#ededed 1092px,#ffffff 1092px,#ffffff 1145px,#ededed 1145px,#ededed 1161px,#ededed 1169px,#ffffff 1169px,#ffffff 1222px,#ededed 1222px,#ededed 1238px,#ededed 1246px,#ffffff 1246px,#ffffff 1299px,#ededed 1299px,#ededed 1315px,#ededed 1323px,#ffffff 1323px,#ffffff 1376px,#ededed 1376px,#ededed 1392px,#ededed 1400px,#ffffff 1400px,#ffffff 1453px,#ededed 1453px,#ededed 1469px,#ededed 1477px,#ffffff 1477px,#ffffff 1530px,#ededed 1530px,#ededed 1547px);"></div>
<div style="left:365px;top:477px;width:1px;height:39px;background:#8ea3ab;"></div>
<div style="left:443px;top:477px;width:1px;height:39px;background:#8ea3ab;"></div>
<div style="left:521px;top:477px;width:1px;height:39px;background:#8ea3ab;"></div>
<div style="left:599px;top:477px;width:1px;height:39px;background:#8ea3ab;"></div>
<div style="left:677px;top:477px;width:1px;height:39px;background:#8ea3ab;"></div>
<div style="left:755px;top:477px;width:1px;height:39px;background:#8ea3ab;"></div>
<div style="left:833px;top:477px;width:1px;height:39px;background:#8ea3ab;"></div>
<div style="left:911px;top:477px;width:1px;height:39px;background:#8ea3ab;"></div>
<div style="left:988px;top:477px;width:1px;height:39px;background:#8ea3ab;"></div>
<div style="left:1065px;top:477px;width:1px;height:39px;background:#8ea3ab;"></div>
<div style="left:1142px;top:477px;width:1px;height:39px;background:#8ea3ab;"></div>
<div style="left:1219px;top:477px;width:1px;height:39px;background:#8ea3ab;"></div>
<div style="left:1296px;top:477px;width:1px;height:39px;background:#8ea3ab;"></div>
<div style="left:1373px;top:477px;width:1px;height:39px;background:#8ea3ab;"></div>
<div style="left:1450px;top:477px;width:1px;height:39px;background:#8ea3ab;"></div>
<div style="left:1527px;top:477px;width:1px;height:39px;background:#8ea3ab;"></div>
<div style="left:1604px;top:477px;width:1px;height:39px;background:#8ea3ab;"></div>
<div style="left:1681px;top:477px;width:1px;height:39px;background:#8ea3ab;"></div>
<div style="left:1758px;top:477px;width:1px;height:39px;background:#8ea3ab;"></div>
<div style="left:1835px;top:477px;width:1px;height:39px;background:#8ea3ab;"></div>
<div style="left:289px;top:516px;width:1547px;height:1px;background:#6f909a;"></div>
<div style="left:289px;top:517px;width:1547px;height:25px;background:linear-gradient(to right,#bdd6de -1px,#bdd6de 6px,#add8e6 6px,#add8e6 59px,#bdd6de 59px,#bdd6de 76px,#bdd6de 84px,#add8e6 84px,#add8e6 137px,#bdd6de 137px,#bdd6de 154px,#bdd6de 162px,#add8e6 162px,#add8e6 215px,#bdd6de 215px,#bdd6de 232px,#bdd6de 240px,#add8e6 240px,#add8e6 293px,#bdd6de 293px,#bdd6de 310px,#bdd6de 318px,#add8e6 318px,#add8e6 371px,#bdd6de 371px,#bdd6de 388px,#bdd6de 396px,#add8e6 396px,#add8e6 449px,#bdd6de 449px,#bdd6de 466px,#bdd6de 474px,#add8e6 474px,#add8e6 527px,#bdd6de 527px,#bdd6de 544px,#bdd6de 552px,#add8e6 552px,#add8e6 605px,#bdd6de 605px,#bdd6de 622px,#bdd6de 630px,#add8e6 630px,#add8e6 683px,#bdd6de 683px,#bdd6de 699px,#bdd6de 707px,#add8e6 707px,#add8e6 760px,#bdd6de 760px,#bdd6de 776px,#bdd6de 784px,#add8e6 784px,#add8e6 837px,#bdd6de 837px,#bdd6de 853px,#bdd6de 861px,#add8e6 861px,#add8e6 914px,#bdd6de 914px,#bdd6de 930px,#bdd6de 938px,#add8e6 938px,#add8e6 991px,#bdd6de 991px,#bdd6de 1007px,#bdd6de 1015px,#add8e6 1015px,#add8e6 1068px,#bdd6de 1068px,#bdd6de 1084px,#bdd6de 1092px,#add8e6 1092px,#add8e6 1145px,#bdd6de 1145px,#bdd6de 1161px,#bdd6de 1169px,#add8e6 1169px,#add8e6 1222px,#bdd6de 1222px,#bdd6de 1238px,#bdd6de 1246px,#add8e6 1246px,#add8e6 1299px,#bdd6de 1299px,#bdd6de 1315px,#bdd6de 1323px,#add8e6 1323px,#add8e6 1376px,#bdd6de 1376px,#bdd6de 1392px,#bdd6de 1400px,#add8e6 1400px,#add8e6 1453px,#bdd6de 1453px,#bdd6de 1469px,#bdd6de 1477px,#add8e6 1477px,#add8e6 1530px,#bdd6de 1530px,#bdd6de 1547px);"></div>
<div style="left:290px;top:519px;width:30px;height:20px;border:1px solid #8ccbdd;border-radius:0 9px 9px 0;background:rgba(255,255,255,0.1);box-sizing:border-box"></div>
<div style="left:1804px;top:519px;width:30px;height:20px;border:1px solid #8ccbdd;border-right:1px solid #8ccbdd;border-radius:10px 0 0 10px;background:rgba(255,255,255,0.1);box-sizing:border-box"></div>
<div style="left:289px;top:542px;width:1547px;height:39px;background:linear-gradient(to right,#ededed -1px,#ededed 6px,#ffffff 6px,#ffffff 59px,#ededed 59px,#ededed 76px,#ededed 84px,#ffffff 84px,#ffffff 137px,#ededed 137px,#ededed 154px,#ededed 162px,#ffffff 162px,#ffffff 215px,#ededed 215px,#ededed 232px,#ededed 240px,#ffffff 240px,#ffffff 293px,#ededed 293px,#ededed 310px,#ededed 318px,#ffffff 318px,#ffffff 371px,#ededed 371px,#ededed 388px,#ededed 396px,#ffffff 396px,#ffffff 449px,#ededed 449px,#ededed 466px,#ededed 474px,#ffffff 474px,#ffffff 527px,#ededed 527px,#ededed 544px,#ededed 552px,#ffffff 552px,#ffffff 605px,#ededed 605px,#ededed 622px,#ededed 630px,#ffffff 630px,#ffffff 683px,#ededed 683px,#ededed 699px,#ededed 707px,#ffffff 707px,#ffffff 760px,#ededed 760px,#ededed 776px,#ededed 784px,#ffffff 784px,#ffffff 837px,#ededed 837px,#ededed 853px,#ededed 861px,#ffffff 861px,#ffffff 914px,#ededed 914px,#ededed 930px,#ededed 938px,#ffffff 938px,#ffffff 991px,#ededed 991px,#ededed 1007px,#ededed 1015px,#ffffff 1015px,#ffffff 1068px,#ededed 1068px,#ededed 1084px,#ededed 1092px,#ffffff 1092px,#ffffff 1145px,#ededed 1145px,#ededed 1161px,#ededed 1169px,#ffffff 1169px,#ffffff 1222px,#ededed 1222px,#ededed 1238px,#ededed 1246px,#ffffff 1246px,#ffffff 1299px,#ededed 1299px,#ededed 1315px,#ededed 1323px,#ffffff 1323px,#ffffff 1376px,#ededed 1376px,#ededed 1392px,#ededed 1400px,#ffffff 1400px,#ffffff 1453px,#ededed 1453px,#ededed 1469px,#ededed 1477px,#ffffff 1477px,#ffffff 1530px,#ededed 1530px,#ededed 1547px);"></div>
<div style="left:365px;top:542px;width:1px;height:39px;background:#8ea3ab;"></div>
<div style="left:443px;top:542px;width:1px;height:39px;background:#8ea3ab;"></div>
<div style="left:521px;top:542px;width:1px;height:39px;background:#8ea3ab;"></div>
<div style="left:599px;top:542px;width:1px;height:39px;background:#8ea3ab;"></div>
<div style="left:677px;top:542px;width:1px;height:39px;background:#8ea3ab;"></div>
<div style="left:755px;top:542px;width:1px;height:39px;background:#8ea3ab;"></div>
<div style="left:833px;top:542px;width:1px;height:39px;background:#8ea3ab;"></div>
<div style="left:911px;top:542px;width:1px;height:39px;background:#8ea3ab;"></div>
<div style="left:988px;top:542px;width:1px;height:39px;background:#8ea3ab;"></div>
<div style="left:1065px;top:542px;width:1px;height:39px;background:#8ea3ab;"></div>
<div style="left:1142px;top:542px;width:1px;height:39px;background:#8ea3ab;"></div>
<div style="left:1219px;top:542px;width:1px;height:39px;background:#8ea3ab;"></div>
<div style="left:1296px;top:542px;width:1px;height:39px;background:#8ea3ab;"></div>
<div style="left:1373px;top:542px;width:1px;height:39px;background:#8ea3ab;"></div>
<div style="left:1450px;top:542px;width:1px;height:39px;background:#8ea3ab;"></div>
<div style="left:1527px;top:542px;width:1px;height:39px;background:#8ea3ab;"></div>
<div style="left:1604px;top:542px;width:1px;height:39px;background:#8ea3ab;"></div>
<div style="left:1681px;top:542px;width:1px;height:39px;background:#8ea3ab;"></div>
<div style="left:1758px;top:542px;width:1px;height:39px;background:#8ea3ab;"></div>
<div style="left:1835px;top:542px;width:1px;height:39px;background:#8ea3ab;"></div>
<div style="left:289px;top:581px;width:1547px;height:1px;background:#6f909a;"></div>
<div style="left:289px;top:582px;width:1547px;height:25px;background:linear-gradient(to right,#bdd6de -1px,#bdd6de 6px,#add8e6 6px,#add8e6 59px,#bdd6de 59px,#bdd6de 76px,#bdd6de 84px,#add8e6 84px,#add8e6 137px,#bdd6de 137px,#bdd6de 154px,#bdd6de 162px,#add8e6 162px,#add8e6 215px,#bdd6de 215px,#bdd6de 232px,#bdd6de 240px,#add8e6 240px,#add8e6 293px,#bdd6de 293px,#bdd6de 310px,#bdd6de 318px,#add8e6 318px,#add8e6 371px,#bdd6de 371px,#bdd6de 388px,#bdd6de 396px,#add8e6 396px,#add8e6 449px,#bdd6de 449px,#bdd6de 466px,#bdd6de 474px,#add8e6 474px,#add8e6 527px,#bdd6de 527px,#bdd6de 544px,#bdd6de 552px,#add8e6 552px,#add8e6 605px,#bdd6de 605px,#bdd6de 622px,#bdd6de 630px,#add8e6 630px,#add8e6 683px,#bdd6de 683px,#bdd6de 699px,#bdd6de 707px,#add8e6 707px,#add8e6 760px,#bdd6de 760px,#bdd6de 776px,#bdd6de 784px,#add8e6 784px,#add8e6 837px,#bdd6de 837px,#bdd6de 853px,#bdd6de 861px,#add8e6 861px,#add8e6 914px,#bdd6de 914px,#bdd6de 930px,#bdd6de 938px,#add8e6 938px,#add8e6 991px,#bdd6de 991px,#bdd6de 1007px,#bdd6de 1015px,#add8e6 1015px,#add8e6 1068px,#bdd6de 1068px,#bdd6de 1084px,#bdd6de 1092px,#add8e6 1092px,#add8e6 1145px,#bdd6de 1145px,#bdd6de 1161px,#bdd6de 1169px,#add8e6 1169px,#add8e6 1222px,#bdd6de 1222px,#bdd6de 1238px,#bdd6de 1246px,#add8e6 1246px,#add8e6 1299px,#bdd6de 1299px,#bdd6de 1315px,#bdd6de 1323px,#add8e6 1323px,#add8e6 1376px,#bdd6de 1376px,#bdd6de 1392px,#bdd6de 1400px,#add8e6 1400px,#add8e6 1453px,#bdd6de 1453px,#bdd6de 1469px,#bdd6de 1477px,#add8e6 1477px,#add8e6 1530px,#bdd6de 1530px,#bdd6de 1547px);"></div>
<div style="left:290px;top:584px;width:30px;height:20px;border:1px solid #8ccbdd;border-radius:0 9px 9px 0;background:rgba(255,255,255,0.1);box-sizing:border-box"></div>
<div style="left:1804px;top:584px;width:30px;height:20px;border:1px solid #8ccbdd;border-right:1px solid #8ccbdd;border-radius:10px 0 0 10px;background:rgba(255,255,255,0.1);box-sizing:border-box"></div>
<div style="left:289px;top:607px;width:1547px;height:39px;background:linear-gradient(to right,#ededed -1px,#ededed 6px,#ffffff 6px,#ffffff 59px,#ededed 59px,#ededed 76px,#ededed 84px,#ffffff 84px,#ffffff 137px,#ededed 137px,#ededed 154px,#ededed 162px,#ffffff 162px,#ffffff 215px,#ededed 215px,#ededed 232px,#ededed 240px,#ffffff 240px,#ffffff 293px,#ededed 293px,#ededed 310px,#ededed 318px,#ffffff 318px,#ffffff 371px,#ededed 371px,#ededed 388px,#ededed 396px,#ffffff 396px,#ffffff 449px,#ededed 449px,#ededed 466px,#ededed 474px,#ffffff 474px,#ffffff 527px,#ededed 527px,#ededed 544px,#ededed 552px,#ffffff 552px,#ffffff 605px,#ededed 605px,#ededed 622px,#ededed 630px,#ffffff 630px,#ffffff 683px,#ededed 683px,#ededed 699px,#ededed 707px,#ffffff 707px,#ffffff 760px,#ededed 760px,#ededed 776px,#ededed 784px,#ffffff 784px,#ffffff 837px,#ededed 837px,#ededed 853px,#ededed 861px,#ffffff 861px,#ffffff 914px,#ededed 914px,#ededed 930px,#ededed 938px,#ffffff 938px,#ffffff 991px,#ededed 991px,#ededed 1007px,#ededed 1015px,#ffffff 1015px,#ffffff 1068px,#ededed 1068px,#ededed 1084px,#ededed 1092px,#ffffff 1092px,#ffffff 1145px,#ededed 1145px,#ededed 1161px,#ededed 1169px,#ffffff 1169px,#ffffff 1222px,#ededed 1222px,#ededed 1238px,#ededed 1246px,#ffffff 1246px,#ffffff 1299px,#ededed 1299px,#ededed 1315px,#ededed 1323px,#ffffff 1323px,#ffffff 1376px,#ededed 1376px,#ededed 1392px,#ededed 1400px,#ffffff 1400px,#ffffff 1453px,#ededed 1453px,#ededed 1469px,#ededed 1477px,#ffffff 1477px,#ffffff 1530px,#ededed 1530px,#ededed 1547px);"></div>
<div style="left:365px;top:607px;width:1px;height:39px;background:#8ea3ab;"></div>
<div style="left:443px;top:607px;width:1px;height:39px;background:#8ea3ab;"></div>
<div style="left:521px;top:607px;width:1px;height:39px;background:#8ea3ab;"></div>
<div style="left:599px;top:607px;width:1px;height:39px;background:#8ea3ab;"></div>
<div style="left:677px;top:607px;width:1px;height:39px;background:#8ea3ab;"></div>
<div style="left:755px;top:607px;width:1px;height:39px;background:#8ea3ab;"></div>
<div style="left:833px;top:607px;width:1px;height:39px;background:#8ea3ab;"></div>
<div style="left:911px;top:607px;width:1px;height:39px;background:#8ea3ab;"></div>
<div style="left:988px;top:607px;width:1px;height:39px;background:#8ea3ab;"></div>
<div style="left:1065px;top:607px;width:1px;height:39px;background:#8ea3ab;"></div>
<div style="left:1142px;top:607px;width:1px;height:39px;background:#8ea3ab;"></div>
<div style="left:1219px;top:607px;width:1px;height:39px;background:#8ea3ab;"></div>
<div style="left:1296px;top:607px;width:1px;height:39px;background:#8ea3ab;"></div>
<div style="left:1373px;top:607px;width:1px;height:39px;background:#8ea3ab;"></div>
<div style="left:1450px;top:607px;width:1px;height:39px;background:#8ea3ab;"></div>
<div style="left:1527px;top:607px;width:1px;height:39px;background:#8ea3ab;"></div>
<div style="left:1604px;top:607px;width:1px;height:39px;background:#8ea3ab;"></div>
<div style="left:1681px;top:607px;width:1px;height:39px;background:#8ea3ab;"></div>
<div style="left:1758px;top:607px;width:1px;height:39px;background:#8ea3ab;"></div>
<div style="left:1835px;top:607px;width:1px;height:39px;background:#8ea3ab;"></div>
<div style="left:289px;top:646px;width:1547px;height:1px;background:#6f909a;"></div>
<div style="left:289px;top:647px;width:1547px;height:25px;background:linear-gradient(to right,#bdd6de -1px,#bdd6de 6px,#add8e6 6px,#add8e6 59px,#bdd6de 59px,#bdd6de 76px,#bdd6de 84px,#add8e6 84px,#add8e6 137px,#bdd6de 137px,#bdd6de 154px,#bdd6de 162px,#add8e6 162px,#add8e6 215px,#bdd6de 215px,#bdd6de 232px,#bdd6de 240px,#add8e6 240px,#add8e6 293px,#bdd6de 293px,#bdd6de 310px,#bdd6de 318px,#add8e6 318px,#add8e6 371px,#bdd6de 371px,#bdd6de 388px,#bdd6de 396px,#add8e6 396px,#add8e6 449px,#bdd6de 449px,#bdd6de 466px,#bdd6de 474px,#add8e6 474px,#add8e6 527px,#bdd6de 527px,#bdd6de 544px,#bdd6de 552px,#add8e6 552px,#add8e6 605px,#bdd6de 605px,#bdd6de 622px,#bdd6de 630px,#add8e6 630px,#add8e6 683px,#bdd6de 683px,#bdd6de 699px,#bdd6de 707px,#add8e6 707px,#add8e6 760px,#bdd6de 760px,#bdd6de 776px,#bdd6de 784px,#add8e6 784px,#add8e6 837px,#bdd6de 837px,#bdd6de 853px,#bdd6de 861px,#add8e6 861px,#add8e6 914px,#bdd6de 914px,#bdd6de 930px,#bdd6de 938px,#add8e6 938px,#add8e6 991px,#bdd6de 991px,#bdd6de 1007px,#bdd6de 1015px,#add8e6 1015px,#add8e6 1068px,#bdd6de 1068px,#bdd6de 1084px,#bdd6de 1092px,#add8e6 1092px,#add8e6 1145px,#bdd6de 1145px,#bdd6de 1161px,#bdd6de 1169px,#add8e6 1169px,#add8e6 1222px,#bdd6de 1222px,#bdd6de 1238px,#bdd6de 1246px,#add8e6 1246px,#add8e6 1299px,#bdd6de 1299px,#bdd6de 1315px,#bdd6de 1323px,#add8e6 1323px,#add8e6 1376px,#bdd6de 1376px,#bdd6de 1392px,#bdd6de 1400px,#add8e6 1400px,#add8e6 1453px,#bdd6de 1453px,#bdd6de 1469px,#bdd6de 1477px,#add8e6 1477px,#add8e6 1530px,#bdd6de 1530px,#bdd6de 1547px);"></div>
<div style="left:290px;top:649px;width:30px;height:20px;border:1px solid #8ccbdd;border-radius:0 9px 9px 0;background:rgba(255,255,255,0.1);box-sizing:border-box"></div>
<div style="left:1804px;top:649px;width:30px;height:20px;border:1px solid #8ccbdd;border-right:1px solid #8ccbdd;border-radius:10px 0 0 10px;background:rgba(255,255,255,0.1);box-sizing:border-box"></div>
<div style="left:289px;top:672px;width:1547px;height:69px;background:linear-gradient(to right,#ededed -1px,#ededed 6px,#ffffff 6px,#ffffff 59px,#ededed 59px,#ededed 76px,#ededed 84px,#ffffff 84px,#ffffff 137px,#ededed 137px,#ededed 154px,#ededed 162px,#ffffff 162px,#ffffff 215px,#ededed 215px,#ededed 232px,#ededed 240px,#ffffff 240px,#ffffff 293px,#ededed 293px,#ededed 310px,#ededed 318px,#ffffff 318px,#ffffff 371px,#ededed 371px,#ededed 388px,#ededed 396px,#ffffff 396px,#ffffff 449px,#ededed 449px,#ededed 466px,#ededed 474px,#ffffff 474px,#ffffff 527px,#ededed 527px,#ededed 544px,#ededed 552px,#ffffff 552px,#ffffff 605px,#ededed 605px,#ededed 622px,#ededed 630px,#ffffff 630px,#ffffff 683px,#ededed 683px,#ededed 699px,#ededed 707px,#ffffff 707px,#ffffff 760px,#ededed 760px,#ededed 776px,#ededed 784px,#ffffff 784px,#ffffff 837px,#ededed 837px,#ededed 853px,#ededed 861px,#ffffff 861px,#ffffff 914px,#ededed 914px,#ededed 930px,#ededed 938px,#ffffff 938px,#ffffff 991px,#ededed 991px,#ededed 1007px,#ededed 1015px,#ffffff 1015px,#ffffff 1068px,#ededed 1068px,#ededed 1084px,#ededed 1092px,#ffffff 1092px,#ffffff 1145px,#ededed 1145px,#ededed 1161px,#ededed 1169px,#ffffff 1169px,#ffffff 1222px,#ededed 1222px,#ededed 1238px,#ededed 1246px,#ffffff 1246px,#ffffff 1299px,#ededed 1299px,#ededed 1315px,#ededed 1323px,#ffffff 1323px,#ffffff 1376px,#ededed 1376px,#ededed 1392px,#ededed 1400px,#ffffff 1400px,#ffffff 1453px,#ededed 1453px,#ededed 1469px,#ededed 1477px,#ffffff 1477px,#ffffff 1530px,#ededed 1530px,#ededed 1547px);"></div>
<div style="left:365px;top:672px;width:1px;height:69px;background:#8ea3ab;"></div>
<div style="left:443px;top:672px;width:1px;height:69px;background:#8ea3ab;"></div>
<div style="left:521px;top:672px;width:1px;height:69px;background:#8ea3ab;"></div>
<div style="left:599px;top:672px;width:1px;height:69px;background:#8ea3ab;"></div>
<div style="left:677px;top:672px;width:1px;height:69px;background:#8ea3ab;"></div>
<div style="left:755px;top:672px;width:1px;height:69px;background:#8ea3ab;"></div>
<div style="left:833px;top:672px;width:1px;height:69px;background:#8ea3ab;"></div>
<div style="left:911px;top:672px;width:1px;height:69px;background:#8ea3ab;"></div>
<div style="left:988px;top:672px;width:1px;height:69px;background:#8ea3ab;"></div>
<div style="left:1065px;top:672px;width:1px;height:69px;background:#8ea3ab;"></div>
<div style="left:1142px;top:672px;width:1px;height:69px;background:#8ea3ab;"></div>
<div style="left:1219px;top:672px;width:1px;height:69px;background:#8ea3ab;"></div>
<div style="left:1296px;top:672px;width:1px;height:69px;background:#8ea3ab;"></div>
<div style="left:1373px;top:672px;width:1px;height:69px;background:#8ea3ab;"></div>
<div style="left:1450px;top:672px;width:1px;height:69px;background:#8ea3ab;"></div>
<div style="left:1527px;top:672px;width:1px;height:69px;background:#8ea3ab;"></div>
<div style="left:1604px;top:672px;width:1px;height:69px;background:#8ea3ab;"></div>
<div style="left:1681px;top:672px;width:1px;height:69px;background:#8ea3ab;"></div>
<div style="left:1758px;top:672px;width:1px;height:69px;background:#8ea3ab;"></div>
<div style="left:1835px;top:672px;width:1px;height:69px;background:#8ea3ab;"></div>
<div style="left:289px;top:741px;width:1547px;height:1px;background:#6f909a;"></div>
<div style="left:289px;top:742px;width:1547px;height:25px;background:linear-gradient(to right,#bdd6de -1px,#bdd6de 6px,#add8e6 6px,#add8e6 59px,#bdd6de 59px,#bdd6de 76px,#bdd6de 84px,#add8e6 84px,#add8e6 137px,#bdd6de 137px,#bdd6de 154px,#bdd6de 162px,#add8e6 162px,#add8e6 215px,#bdd6de 215px,#bdd6de 232px,#bdd6de 240px,#add8e6 240px,#add8e6 293px,#bdd6de 293px,#bdd6de 310px,#bdd6de 318px,#add8e6 318px,#add8e6 371px,#bdd6de 371px,#bdd6de 388px,#bdd6de 396px,#add8e6 396px,#add8e6 449px,#bdd6de 449px,#bdd6de 466px,#bdd6de 474px,#add8e6 474px,#add8e6 527px,#bdd6de 527px,#bdd6de 544px,#bdd6de 552px,#add8e6 552px,#add8e6 605px,#bdd6de 605px,#bdd6de 622px,#bdd6de 630px,#add8e6 630px,#add8e6 683px,#bdd6de 683px,#bdd6de 699px,#bdd6de 707px,#add8e6 707px,#add8e6 760px,#bdd6de 760px,#bdd6de 776px,#bdd6de 784px,#add8e6 784px,#add8e6 837px,#bdd6de 837px,#bdd6de 853px,#bdd6de 861px,#add8e6 861px,#add8e6 914px,#bdd6de 914px,#bdd6de 930px,#bdd6de 938px,#add8e6 938px,#add8e6 991px,#bdd6de 991px,#bdd6de 1007px,#bdd6de 1015px,#add8e6 1015px,#add8e6 1068px,#bdd6de 1068px,#bdd6de 1084px,#bdd6de 1092px,#add8e6 1092px,#add8e6 1145px,#bdd6de 1145px,#bdd6de 1161px,#bdd6de 1169px,#add8e6 1169px,#add8e6 1222px,#bdd6de 1222px,#bdd6de 1238px,#bdd6de 1246px,#add8e6 1246px,#add8e6 1299px,#bdd6de 1299px,#bdd6de 1315px,#bdd6de 1323px,#add8e6 1323px,#add8e6 1376px,#bdd6de 1376px,#bdd6de 1392px,#bdd6de 1400px,#add8e6 1400px,#add8e6 1453px,#bdd6de 1453px,#bdd6de 1469px,#bdd6de 1477px,#add8e6 1477px,#add8e6 1530px,#bdd6de 1530px,#bdd6de 1547px);"></div>
<div style="left:290px;top:744px;width:30px;height:20px;border:1px solid #8ccbdd;border-radius:0 9px 9px 0;background:rgba(255,255,255,0.1);box-sizing:border-box"></div>
<div style="left:1804px;top:744px;width:30px;height:20px;border:1px solid #8ccbdd;border-right:1px solid #8ccbdd;border-radius:10px 0 0 10px;background:rgba(255,255,255,0.1);box-sizing:border-box"></div>
<div style="left:289px;top:767px;width:1547px;height:39px;background:linear-gradient(to right,#ededed -1px,#ededed 6px,#ffffff 6px,#ffffff 59px,#ededed 59px,#ededed 76px,#ededed 84px,#ffffff 84px,#ffffff 137px,#ededed 137px,#ededed 154px,#ededed 162px,#ffffff 162px,#ffffff 215px,#ededed 215px,#ededed 232px,#ededed 240px,#ffffff 240px,#ffffff 293px,#ededed 293px,#ededed 310px,#ededed 318px,#ffffff 318px,#ffffff 371px,#ededed 371px,#ededed 388px,#ededed 396px,#ffffff 396px,#ffffff 449px,#ededed 449px,#ededed 466px,#ededed 474px,#ffffff 474px,#ffffff 527px,#ededed 527px,#ededed 544px,#ededed 552px,#ffffff 552px,#ffffff 605px,#ededed 605px,#ededed 622px,#ededed 630px,#ffffff 630px,#ffffff 683px,#ededed 683px,#ededed 699px,#ededed 707px,#ffffff 707px,#ffffff 760px,#ededed 760px,#ededed 776px,#ededed 784px,#ffffff 784px,#ffffff 837px,#ededed 837px,#ededed 853px,#ededed 861px,#ffffff 861px,#ffffff 914px,#ededed 914px,#ededed 930px,#ededed 938px,#ffffff 938px,#ffffff 991px,#ededed 991px,#ededed 1007px,#ededed 1015px,#ffffff 1015px,#ffffff 1068px,#ededed 1068px,#ededed 1084px,#ededed 1092px,#ffffff 1092px,#ffffff 1145px,#ededed 1145px,#ededed 1161px,#ededed 1169px,#ffffff 1169px,#ffffff 1222px,#ededed 1222px,#ededed 1238px,#ededed 1246px,#ffffff 1246px,#ffffff 1299px,#ededed 1299px,#ededed 1315px,#ededed 1323px,#ffffff 1323px,#ffffff 1376px,#ededed 1376px,#ededed 1392px,#ededed 1400px,#ffffff 1400px,#ffffff 1453px,#ededed 1453px,#ededed 1469px,#ededed 1477px,#ffffff 1477px,#ffffff 1530px,#ededed 1530px,#ededed 1547px);"></div>
<div style="left:365px;top:767px;width:1px;height:39px;background:#8ea3ab;"></div>
<div style="left:443px;top:767px;width:1px;height:39px;background:#8ea3ab;"></div>
<div style="left:521px;top:767px;width:1px;height:39px;background:#8ea3ab;"></div>
<div style="left:599px;top:767px;width:1px;height:39px;background:#8ea3ab;"></div>
<div style="left:677px;top:767px;width:1px;height:39px;background:#8ea3ab;"></div>
<div style="left:755px;top:767px;width:1px;height:39px;background:#8ea3ab;"></div>
<div style="left:833px;top:767px;width:1px;height:39px;background:#8ea3ab;"></div>
<div style="left:911px;top:767px;width:1px;height:39px;background:#8ea3ab;"></div>
<div style="left:988px;top:767px;width:1px;height:39px;background:#8ea3ab;"></div>
<div style="left:1065px;top:767px;width:1px;height:39px;background:#8ea3ab;"></div>
<div style="left:1142px;top:767px;width:1px;height:39px;background:#8ea3ab;"></div>
<div style="left:1219px;top:767px;width:1px;height:39px;background:#8ea3ab;"></div>
<div style="left:1296px;top:767px;width:1px;height:39px;background:#8ea3ab;"></div>
<div style="left:1373px;top:767px;width:1px;height:39px;background:#8ea3ab;"></div>
<div style="left:1450px;top:767px;width:1px;height:39px;background:#8ea3ab;"></div>
<div style="left:1527px;top:767px;width:1px;height:39px;background:#8ea3ab;"></div>
<div style="left:1604px;top:767px;width:1px;height:39px;background:#8ea3ab;"></div>
<div style="left:1681px;top:767px;width:1px;height:39px;background:#8ea3ab;"></div>
<div style="left:1758px;top:767px;width:1px;height:39px;background:#8ea3ab;"></div>
<div style="left:1835px;top:767px;width:1px;height:39px;background:#8ea3ab;"></div>
<div style="left:289px;top:806px;width:1547px;height:1px;background:#6f909a;"></div>
<div style="left:289px;top:807px;width:1547px;height:25px;background:linear-gradient(to right,#bdd6de -1px,#bdd6de 6px,#add8e6 6px,#add8e6 59px,#bdd6de 59px,#bdd6de 76px,#bdd6de 84px,#add8e6 84px,#add8e6 137px,#bdd6de 137px,#bdd6de 154px,#bdd6de 162px,#add8e6 162px,#add8e6 215px,#bdd6de 215px,#bdd6de 232px,#bdd6de 240px,#add8e6 240px,#add8e6 293px,#bdd6de 293px,#bdd6de 310px,#bdd6de 318px,#add8e6 318px,#add8e6 371px,#bdd6de 371px,#bdd6de 388px,#bdd6de 396px,#add8e6 396px,#add8e6 449px,#bdd6de 449px,#bdd6de 466px,#bdd6de 474px,#add8e6 474px,#add8e6 527px,#bdd6de 527px,#bdd6de 544px,#bdd6de 552px,#add8e6 552px,#add8e6 605px,#bdd6de 605px,#bdd6de 622px,#bdd6de 630px,#add8e6 630px,#add8e6 683px,#bdd6de 683px,#bdd6de 699px,#bdd6de 707px,#add8e6 707px,#add8e6 760px,#bdd6de 760px,#bdd6de 776px,#bdd6de 784px,#add8e6 784px,#add8e6 837px,#bdd6de 837px,#bdd6de 853px,#bdd6de 861px,#add8e6 861px,#add8e6 914px,#bdd6de 914px,#bdd6de 930px,#bdd6de 938px,#add8e6 938px,#add8e6 991px,#bdd6de 991px,#bdd6de 1007px,#bdd6de 1015px,#add8e6 1015px,#add8e6 1068px,#bdd6de 1068px,#bdd6de 1084px,#bdd6de 1092px,#add8e6 1092px,#add8e6 1145px,#bdd6de 1145px,#bdd6de 1161px,#bdd6de 1169px,#add8e6 1169px,#add8e6 1222px,#bdd6de 1222px,#bdd6de 1238px,#bdd6de 1246px,#add8e6 1246px,#add8e6 1299px,#bdd6de 1299px,#bdd6de 1315px,#bdd6de 1323px,#add8e6 1323px,#add8e6 1376px,#bdd6de 1376px,#bdd6de 1392px,#bdd6de 1400px,#add8e6 1400px,#add8e6 1453px,#bdd6de 1453px,#bdd6de 1469px,#bdd6de 1477px,#add8e6 1477px,#add8e6 1530px,#bdd6de 1530px,#bdd6de 1547px);"></div>
<div style="left:290px;top:809px;width:30px;height:20px;border:1px solid #8ccbdd;border-radius:0 9px 9px 0;background:rgba(255,255,255,0.1);box-sizing:border-box"></div>
<div style="left:1804px;top:809px;width:30px;height:20px;border:1px solid #8ccbdd;border-right:1px solid #8ccbdd;border-radius:10px 0 0 10px;background:rgba(255,255,255,0.1);box-sizing:border-box"></div>
<div style="left:289px;top:832px;width:1547px;height:24px;background:linear-gradient(to right,#ededed -1px,#ededed 6px,#ffffff 6px,#ffffff 59px,#ededed 59px,#ededed 76px,#ededed 84px,#ffffff 84px,#ffffff 137px,#ededed 137px,#ededed 154px,#ededed 162px,#ffffff 162px,#ffffff 215px,#ededed 215px,#ededed 232px,#ededed 240px,#ffffff 240px,#ffffff 293px,#ededed 293px,#ededed 310px,#ededed 318px,#ffffff 318px,#ffffff 371px,#ededed 371px,#ededed 388px,#ededed 396px,#ffffff 396px,#ffffff 449px,#ededed 449px,#ededed 466px,#ededed 474px,#ffffff 474px,#ffffff 527px,#ededed 527px,#ededed 544px,#ededed 552px,#ffffff 552px,#ffffff 605px,#ededed 605px,#ededed 622px,#ededed 630px,#ffffff 630px,#ffffff 683px,#ededed 683px,#ededed 699px,#ededed 707px,#ffffff 707px,#ffffff 760px,#ededed 760px,#ededed 776px,#ededed 784px,#ffffff 784px,#ffffff 837px,#ededed 837px,#ededed 853px,#ededed 861px,#ffffff 861px,#ffffff 914px,#ededed 914px,#ededed 930px,#ededed 938px,#ffffff 938px,#ffffff 991px,#ededed 991px,#ededed 1007px,#ededed 1015px,#ffffff 1015px,#ffffff 1068px,#ededed 1068px,#ededed 1084px,#ededed 1092px,#ffffff 1092px,#ffffff 1145px,#ededed 1145px,#ededed 1161px,#ededed 1169px,#ffffff 1169px,#ffffff 1222px,#ededed 1222px,#ededed 1238px,#ededed 1246px,#ffffff 1246px,#ffffff 1299px,#ededed 1299px,#ededed 1315px,#ededed 1323px,#ffffff 1323px,#ffffff 1376px,#ededed 1376px,#ededed 1392px,#ededed 1400px,#ffffff 1400px,#ffffff 1453px,#ededed 1453px,#ededed 1469px,#ededed 1477px,#ffffff 1477px,#ffffff 1530px,#ededed 1530px,#ededed 1547px);"></div>
<div style="left:365px;top:832px;width:1px;height:24px;background:#8ea3ab;"></div>
<div style="left:443px;top:832px;width:1px;height:24px;background:#8ea3ab;"></div>
<div style="left:521px;top:832px;width:1px;height:24px;background:#8ea3ab;"></div>
<div style="left:599px;top:832px;width:1px;height:24px;background:#8ea3ab;"></div>
<div style="left:677px;top:832px;width:1px;height:24px;background:#8ea3ab;"></div>
<div style="left:755px;top:832px;width:1px;height:24px;background:#8ea3ab;"></div>
<div style="left:833px;top:832px;width:1px;height:24px;background:#8ea3ab;"></div>
<div style="left:911px;top:832px;width:1px;height:24px;background:#8ea3ab;"></div>
<div style="left:988px;top:832px;width:1px;height:24px;background:#8ea3ab;"></div>
<div style="left:1065px;top:832px;width:1px;height:24px;background:#8ea3ab;"></div>
<div style="left:1142px;top:832px;width:1px;height:24px;background:#8ea3ab;"></div>
<div style="left:1219px;top:832px;width:1px;height:24px;background:#8ea3ab;"></div>
<div style="left:1296px;top:832px;width:1px;height:24px;background:#8ea3ab;"></div>
<div style="left:1373px;top:832px;width:1px;height:24px;background:#8ea3ab;"></div>
<div style="left:1450px;top:832px;width:1px;height:24px;background:#8ea3ab;"></div>
<div style="left:1527px;top:832px;width:1px;height:24px;background:#8ea3ab;"></div>
<div style="left:1604px;top:832px;width:1px;height:24px;background:#8ea3ab;"></div>
<div style="left:1681px;top:832px;width:1px;height:24px;background:#8ea3ab;"></div>
<div style="left:1758px;top:832px;width:1px;height:24px;background:#8ea3ab;"></div>
<div style="left:1835px;top:832px;width:1px;height:24px;background:#8ea3ab;"></div>
<div style="left:289px;top:856px;width:1547px;height:1px;background:#6f909a;"></div>
<div style="left:290px;top:834px;width:30px;height:20px;border:1px solid #bfe0fb;border-radius:0 9px 9px 0;background:rgba(240,248,255,0.6);box-sizing:border-box"></div>
<div style="left:1804px;top:834px;width:30px;height:20px;border:1px solid #bfe0fb;border-radius:10px 0 0 10px;background:rgba(240,248,255,0.5);box-sizing:border-box"></div>
<div style="left:289px;top:857px;width:1547px;height:25px;background:linear-gradient(to right,#bdd6de -1px,#bdd6de 6px,#add8e6 6px,#add8e6 59px,#bdd6de 59px,#bdd6de 76px,#bdd6de 84px,#add8e6 84px,#add8e6 137px,#bdd6de 137px,#bdd6de 154px,#bdd6de 162px,#add8e6 162px,#add8e6 215px,#bdd6de 215px,#bdd6de 232px,#bdd6de 240px,#add8e6 240px,#add8e6 293px,#bdd6de 293px,#bdd6de 310px,#bdd6de 318px,#add8e6 318px,#add8e6 371px,#bdd6de 371px,#bdd6de 388px,#bdd6de 396px,#add8e6 396px,#add8e6 449px,#bdd6de 449px,#bdd6de 466px,#bdd6de 474px,#add8e6 474px,#add8e6 527px,#bdd6de 527px,#bdd6de 544px,#bdd6de 552px,#add8e6 552px,#add8e6 605px,#bdd6de 605px,#bdd6de 622px,#bdd6de 630px,#add8e6 630px,#add8e6 683px,#bdd6de 683px,#bdd6de 699px,#bdd6de 707px,#add8e6 707px,#add8e6 760px,#bdd6de 760px,#bdd6de 776px,#bdd6de 784px,#add8e6 784px,#add8e6 837px,#bdd6de 837px,#bdd6de 853px,#bdd6de 861px,#add8e6 861px,#add8e6 914px,#bdd6de 914px,#bdd6de 930px,#bdd6de 938px,#add8e6 938px,#add8e6 991px,#bdd6de 991px,#bdd6de 1007px,#bdd6de 1015px,#add8e6 1015px,#add8e6 1068px,#bdd6de 1068px,#bdd6de 1084px,#bdd6de 1092px,#add8e6 1092px,#add8e6 1145px,#bdd6de 1145px,#bdd6de 1161px,#bdd6de 1169px,#add8e6 1169px,#add8e6 1222px,#bdd6de 1222px,#bdd6de 1238px,#bdd6de 1246px,#add8e6 1246px,#add8e6 1299px,#bdd6de 1299px,#bdd6de 1315px,#bdd6de 1323px,#add8e6 1323px,#add8e6 1376px,#bdd6de 1376px,#bdd6de 1392px,#bdd6de 1400px,#add8e6 1400px,#add8e6 1453px,#bdd6de 1453px,#bdd6de 1469px,#bdd6de 1477px,#add8e6 1477px,#add8e6 1530px,#bdd6de 1530px,#bdd6de 1547px);"></div>
<div style="left:290px;top:859px;width:30px;height:20px;border:1px solid #8ccbdd;border-radius:0 9px 9px 0;background:rgba(255,255,255,0.1);box-sizing:border-box"></div>
<div style="left:1804px;top:859px;width:30px;height:20px;border:1px solid #8ccbdd;border-right:1px solid #8ccbdd;border-radius:10px 0 0 10px;background:rgba(255,255,255,0.1);box-sizing:border-box"></div>
<div style="left:289px;top:882px;width:1547px;height:24px;background:linear-gradient(to right,#ededed -1px,#ededed 6px,#ffffff 6px,#ffffff 59px,#ededed 59px,#ededed 76px,#ededed 84px,#ffffff 84px,#ffffff 137px,#ededed 137px,#ededed 154px,#ededed 162px,#ffffff 162px,#ffffff 215px,#ededed 215px,#ededed 232px,#ededed 240px,#ffffff 240px,#ffffff 293px,#ededed 293px,#ededed 310px,#ededed 318px,#ffffff 318px,#ffffff 371px,#ededed 371px,#ededed 388px,#ededed 396px,#ffffff 396px,#ffffff 449px,#ededed 449px,#ededed 466px,#ededed 474px,#ffffff 474px,#ffffff 527px,#ededed 527px,#ededed 544px,#ededed 552px,#ffffff 552px,#ffffff 605px,#ededed 605px,#ededed 622px,#ededed 630px,#ffffff 630px,#ffffff 683px,#ededed 683px,#ededed 699px,#ededed 707px,#ffffff 707px,#ffffff 760px,#ededed 760px,#ededed 776px,#ededed 784px,#ffffff 784px,#ffffff 837px,#ededed 837px,#ededed 853px,#ededed 861px,#ffffff 861px,#ffffff 914px,#ededed 914px,#ededed 930px,#ededed 938px,#ffffff 938px,#ffffff 991px,#ededed 991px,#ededed 1007px,#ededed 1015px,#ffffff 1015px,#ffffff 1068px,#ededed 1068px,#ededed 1084px,#ededed 1092px,#ffffff 1092px,#ffffff 1145px,#ededed 1145px,#ededed 1161px,#ededed 1169px,#ffffff 1169px,#ffffff 1222px,#ededed 1222px,#ededed 1238px,#ededed 1246px,#ffffff 1246px,#ffffff 1299px,#ededed 1299px,#ededed 1315px,#ededed 1323px,#ffffff 1323px,#ffffff 1376px,#ededed 1376px,#ededed 1392px,#ededed 1400px,#ffffff 1400px,#ffffff 1453px,#ededed 1453px,#ededed 1469px,#ededed 1477px,#ffffff 1477px,#ffffff 1530px,#ededed 1530px,#ededed 1547px);"></div>
<div style="left:365px;top:882px;width:1px;height:24px;background:#8ea3ab;"></div>
<div style="left:443px;top:882px;width:1px;height:24px;background:#8ea3ab;"></div>
<div style="left:521px;top:882px;width:1px;height:24px;background:#8ea3ab;"></div>
<div style="left:599px;top:882px;width:1px;height:24px;background:#8ea3ab;"></div>
<div style="left:677px;top:882px;width:1px;height:24px;background:#8ea3ab;"></div>
<div style="left:755px;top:882px;width:1px;height:24px;background:#8ea3ab;"></div>
<div style="left:833px;top:882px;width:1px;height:24px;background:#8ea3ab;"></div>
<div style="left:911px;top:882px;width:1px;height:24px;background:#8ea3ab;"></div>
<div style="left:988px;top:882px;width:1px;height:24px;background:#8ea3ab;"></div>
<div style="left:1065px;top:882px;width:1px;height:24px;background:#8ea3ab;"></div>
<div style="left:1142px;top:882px;width:1px;height:24px;background:#8ea3ab;"></div>
<div style="left:1219px;top:882px;width:1px;height:24px;background:#8ea3ab;"></div>
<div style="left:1296px;top:882px;width:1px;height:24px;background:#8ea3ab;"></div>
<div style="left:1373px;top:882px;width:1px;height:24px;background:#8ea3ab;"></div>
<div style="left:1450px;top:882px;width:1px;height:24px;background:#8ea3ab;"></div>
<div style="left:1527px;top:882px;width:1px;height:24px;background:#8ea3ab;"></div>
<div style="left:1604px;top:882px;width:1px;height:24px;background:#8ea3ab;"></div>
<div style="left:1681px;top:882px;width:1px;height:24px;background:#8ea3ab;"></div>
<div style="left:1758px;top:882px;width:1px;height:24px;background:#8ea3ab;"></div>
<div style="left:1835px;top:882px;width:1px;height:24px;background:#8ea3ab;"></div>
<div style="left:289px;top:906px;width:1547px;height:1px;background:#6f909a;"></div>
<div style="left:290px;top:884px;width:30px;height:20px;border:1px solid #bfe0fb;border-radius:0 9px 9px 0;background:rgba(240,248,255,0.6);box-sizing:border-box"></div>
<div style="left:1804px;top:884px;width:30px;height:20px;border:1px solid #bfe0fb;border-radius:10px 0 0 10px;background:rgba(240,248,255,0.5);box-sizing:border-box"></div>
<div style="left:289px;top:907px;width:1547px;height:25px;background:linear-gradient(to right,#bdd6de -1px,#bdd6de 6px,#add8e6 6px,#add8e6 59px,#bdd6de 59px,#bdd6de 76px,#bdd6de 84px,#add8e6 84px,#add8e6 137px,#bdd6de 137px,#bdd6de 154px,#bdd6de 162px,#add8e6 162px,#add8e6 215px,#bdd6de 215px,#bdd6de 232px,#bdd6de 240px,#add8e6 240px,#add8e6 293px,#bdd6de 293px,#bdd6de 310px,#bdd6de 318px,#add8e6 318px,#add8e6 371px,#bdd6de 371px,#bdd6de 388px,#bdd6de 396px,#add8e6 396px,#add8e6 449px,#bdd6de 449px,#bdd6de 466px,#bdd6de 474px,#add8e6 474px,#add8e6 527px,#bdd6de 527px,#bdd6de 544px,#bdd6de 552px,#add8e6 552px,#add8e6 605px,#bdd6de 605px,#bdd6de 622px,#bdd6de 630px,#add8e6 630px,#add8e6 683px,#bdd6de 683px,#bdd6de 699px,#bdd6de 707px,#add8e6 707px,#add8e6 760px,#bdd6de 760px,#bdd6de 776px,#bdd6de 784px,#add8e6 784px,#add8e6 837px,#bdd6de 837px,#bdd6de 853px,#bdd6de 861px,#add8e6 861px,#add8e6 914px,#bdd6de 914px,#bdd6de 930px,#bdd6de 938px,#add8e6 938px,#add8e6 991px,#bdd6de 991px,#bdd6de 1007px,#bdd6de 1015px,#add8e6 1015px,#add8e6 1068px,#bdd6de 1068px,#bdd6de 1084px,#bdd6de 1092px,#add8e6 1092px,#add8e6 1145px,#bdd6de 1145px,#bdd6de 1161px,#bdd6de 1169px,#add8e6 1169px,#add8e6 1222px,#bdd6de 1222px,#bdd6de 1238px,#bdd6de 1246px,#add8e6 1246px,#add8e6 1299px,#bdd6de 1299px,#bdd6de 1315px,#bdd6de 1323px,#add8e6 1323px,#add8e6 1376px,#bdd6de 1376px,#bdd6de 1392px,#bdd6de 1400px,#add8e6 1400px,#add8e6 1453px,#bdd6de 1453px,#bdd6de 1469px,#bdd6de 1477px,#add8e6 1477px,#add8e6 1530px,#bdd6de 1530px,#bdd6de 1547px);"></div>
<div style="left:290px;top:909px;width:30px;height:20px;border:1px solid #8ccbdd;border-radius:0 9px 9px 0;background:rgba(255,255,255,0.1);box-sizing:border-box"></div>
<div style="left:1804px;top:909px;width:30px;height:20px;border:1px solid #8ccbdd;border-right:1px solid #8ccbdd;border-radius:10px 0 0 10px;background:rgba(255,255,255,0.1);box-sizing:border-box"></div>
<div style="left:289px;top:932px;width:1547px;height:24px;background:linear-gradient(to right,#ededed -1px,#ededed 6px,#ffffff 6px,#ffffff 59px,#ededed 59px,#ededed 76px,#ededed 84px,#ffffff 84px,#ffffff 137px,#ededed 137px,#ededed 154px,#ededed 162px,#ffffff 162px,#ffffff 215px,#ededed 215px,#ededed 232px,#ededed 240px,#ffffff 240px,#ffffff 293px,#ededed 293px,#ededed 310px,#ededed 318px,#ffffff 318px,#ffffff 371px,#ededed 371px,#ededed 388px,#ededed 396px,#ffffff 396px,#ffffff 449px,#ededed 449px,#ededed 466px,#ededed 474px,#ffffff 474px,#ffffff 527px,#ededed 527px,#ededed 544px,#ededed 552px,#ffffff 552px,#ffffff 605px,#ededed 605px,#ededed 622px,#ededed 630px,#ffffff 630px,#ffffff 683px,#ededed 683px,#ededed 699px,#ededed 707px,#ffffff 707px,#ffffff 760px,#ededed 760px,#ededed 776px,#ededed 784px,#ffffff 784px,#ffffff 837px,#ededed 837px,#ededed 853px,#ededed 861px,#ffffff 861px,#ffffff 914px,#ededed 914px,#ededed 930px,#ededed 938px,#ffffff 938px,#ffffff 991px,#ededed 991px,#ededed 1007px,#ededed 1015px,#ffffff 1015px,#ffffff 1068px,#ededed 1068px,#ededed 1084px,#ededed 1092px,#ffffff 1092px,#ffffff 1145px,#ededed 1145px,#ededed 1161px,#ededed 1169px,#ffffff 1169px,#ffffff 1222px,#ededed 1222px,#ededed 1238px,#ededed 1246px,#ffffff 1246px,#ffffff 1299px,#ededed 1299px,#ededed 1315px,#ededed 1323px,#ffffff 1323px,#ffffff 1376px,#ededed 1376px,#ededed 1392px,#ededed 1400px,#ffffff 1400px,#ffffff 1453px,#ededed 1453px,#ededed 1469px,#ededed 1477px,#ffffff 1477px,#ffffff 1530px,#ededed 1530px,#ededed 1547px);"></div>
<div style="left:365px;top:932px;width:1px;height:24px;background:#8ea3ab;"></div>
<div style="left:443px;top:932px;width:1px;height:24px;background:#8ea3ab;"></div>
<div style="left:521px;top:932px;width:1px;height:24px;background:#8ea3ab;"></div>
<div style="left:599px;top:932px;width:1px;height:24px;background:#8ea3ab;"></div>
<div style="left:677px;top:932px;width:1px;height:24px;background:#8ea3ab;"></div>
<div style="left:755px;top:932px;width:1px;height:24px;background:#8ea3ab;"></div>
<div style="left:833px;top:932px;width:1px;height:24px;background:#8ea3ab;"></div>
<div style="left:911px;top:932px;width:1px;height:24px;background:#8ea3ab;"></div>
<div style="left:988px;top:932px;width:1px;height:24px;background:#8ea3ab;"></div>
<div style="left:1065px;top:932px;width:1px;height:24px;background:#8ea3ab;"></div>
<div style="left:1142px;top:932px;width:1px;height:24px;background:#8ea3ab;"></div>
<div style="left:1219px;top:932px;width:1px;height:24px;background:#8ea3ab;"></div>
<div style="left:1296px;top:932px;width:1px;height:24px;background:#8ea3ab;"></div>
<div style="left:1373px;top:932px;width:1px;height:24px;background:#8ea3ab;"></div>
<div style="left:1450px;top:932px;width:1px;height:24px;background:#8ea3ab;"></div>
<div style="left:1527px;top:932px;width:1px;height:24px;background:#8ea3ab;"></div>
<div style="left:1604px;top:932px;width:1px;height:24px;background:#8ea3ab;"></div>
<div style="left:1681px;top:932px;width:1px;height:24px;background:#8ea3ab;"></div>
<div style="left:1758px;top:932px;width:1px;height:24px;background:#8ea3ab;"></div>
<div style="left:1835px;top:932px;width:1px;height:24px;background:#8ea3ab;"></div>
<div style="left:289px;top:956px;width:1547px;height:1px;background:#6f909a;"></div>
<div style="left:290px;top:934px;width:30px;height:20px;border:1px solid #bfe0fb;border-radius:0 9px 9px 0;background:rgba(240,248,255,0.6);box-sizing:border-box"></div>
<div style="left:1804px;top:934px;width:30px;height:20px;border:1px solid #bfe0fb;border-radius:10px 0 0 10px;background:rgba(240,248,255,0.5);box-sizing:border-box"></div>
<div style="left:289px;top:957px;width:1547px;height:25px;background:linear-gradient(to right,#bdd6de -1px,#bdd6de 6px,#add8e6 6px,#add8e6 59px,#bdd6de 59px,#bdd6de 76px,#bdd6de 84px,#add8e6 84px,#add8e6 137px,#bdd6de 137px,#bdd6de 154px,#bdd6de 162px,#add8e6 162px,#add8e6 215px,#bdd6de 215px,#bdd6de 232px,#bdd6de 240px,#add8e6 240px,#add8e6 293px,#bdd6de 293px,#bdd6de 310px,#bdd6de 318px,#add8e6 318px,#add8e6 371px,#bdd6de 371px,#bdd6de 388px,#bdd6de 396px,#add8e6 396px,#add8e6 449px,#bdd6de 449px,#bdd6de 466px,#bdd6de 474px,#add8e6 474px,#add8e6 527px,#bdd6de 527px,#bdd6de 544px,#bdd6de 552px,#add8e6 552px,#add8e6 605px,#bdd6de 605px,#bdd6de 622px,#bdd6de 630px,#add8e6 630px,#add8e6 683px,#bdd6de 683px,#bdd6de 699px,#bdd6de 707px,#add8e6 707px,#add8e6 760px,#bdd6de 760px,#bdd6de 776px,#bdd6de 784px,#add8e6 784px,#add8e6 837px,#bdd6de 837px,#bdd6de 853px,#bdd6de 861px,#add8e6 861px,#add8e6 914px,#bdd6de 914px,#bdd6de 930px,#bdd6de 938px,#add8e6 938px,#add8e6 991px,#bdd6de 991px,#bdd6de 1007px,#bdd6de 1015px,#add8e6 1015px,#add8e6 1068px,#bdd6de 1068px,#bdd6de 1084px,#bdd6de 1092px,#add8e6 1092px,#add8e6 1145px,#bdd6de 1145px,#bdd6de 1161px,#bdd6de 1169px,#add8e6 1169px,#add8e6 1222px,#bdd6de 1222px,#bdd6de 1238px,#bdd6de 1246px,#add8e6 1246px,#add8e6 1299px,#bdd6de 1299px,#bdd6de 1315px,#bdd6de 1323px,#add8e6 1323px,#add8e6 1376px,#bdd6de 1376px,#bdd6de 1392px,#bdd6de 1400px,#add8e6 1400px,#add8e6 1453px,#bdd6de 1453px,#bdd6de 1469px,#bdd6de 1477px,#add8e6 1477px,#add8e6 1530px,#bdd6de 1530px,#bdd6de 1547px);"></div>
<div style="left:290px;top:959px;width:30px;height:20px;border:1px solid #8ccbdd;border-radius:0 9px 9px 0;background:rgba(255,255,255,0.1);box-sizing:border-box"></div>
<div style="left:1804px;top:959px;width:30px;height:20px;border:1px solid #8ccbdd;border-right:1px solid #8ccbdd;border-radius:10px 0 0 10px;background:rgba(255,255,255,0.1);box-sizing:border-box"></div>
<div style="left:289px;top:982px;width:1547px;height:24px;background:linear-gradient(to right,#ededed -1px,#ededed 6px,#ffffff 6px,#ffffff 59px,#ededed 59px,#ededed 76px,#ededed 84px,#ffffff 84px,#ffffff 137px,#ededed 137px,#ededed 154px,#ededed 162px,#ffffff 162px,#ffffff 215px,#ededed 215px,#ededed 232px,#ededed 240px,#ffffff 240px,#ffffff 293px,#ededed 293px,#ededed 310px,#ededed 318px,#ffffff 318px,#ffffff 371px,#ededed 371px,#ededed 388px,#ededed 396px,#ffffff 396px,#ffffff 449px,#ededed 449px,#ededed 466px,#ededed 474px,#ffffff 474px,#ffffff 527px,#ededed 527px,#ededed 544px,#ededed 552px,#ffffff 552px,#ffffff 605px,#ededed 605px,#ededed 622px,#ededed 630px,#ffffff 630px,#ffffff 683px,#ededed 683px,#ededed 699px,#ededed 707px,#ffffff 707px,#ffffff 760px,#ededed 760px,#ededed 776px,#ededed 784px,#ffffff 784px,#ffffff 837px,#ededed 837px,#ededed 853px,#ededed 861px,#ffffff 861px,#ffffff 914px,#ededed 914px,#ededed 930px,#ededed 938px,#ffffff 938px,#ffffff 991px,#ededed 991px,#ededed 1007px,#ededed 1015px,#ffffff 1015px,#ffffff 1068px,#ededed 1068px,#ededed 1084px,#ededed 1092px,#ffffff 1092px,#ffffff 1145px,#ededed 1145px,#ededed 1161px,#ededed 1169px,#ffffff 1169px,#ffffff 1222px,#ededed 1222px,#ededed 1238px,#ededed 1246px,#ffffff 1246px,#ffffff 1299px,#ededed 1299px,#ededed 1315px,#ededed 1323px,#ffffff 1323px,#ffffff 1376px,#ededed 1376px,#ededed 1392px,#ededed 1400px,#ffffff 1400px,#ffffff 1453px,#ededed 1453px,#ededed 1469px,#ededed 1477px,#ffffff 1477px,#ffffff 1530px,#ededed 1530px,#ededed 1547px);"></div>
<div style="left:365px;top:982px;width:1px;height:24px;background:#8ea3ab;"></div>
<div style="left:443px;top:982px;width:1px;height:24px;background:#8ea3ab;"></div>
<div style="left:521px;top:982px;width:1px;height:24px;background:#8ea3ab;"></div>
<div style="left:599px;top:982px;width:1px;height:24px;background:#8ea3ab;"></div>
<div style="left:677px;top:982px;width:1px;height:24px;background:#8ea3ab;"></div>
<div style="left:755px;top:982px;width:1px;height:24px;background:#8ea3ab;"></div>
<div style="left:833px;top:982px;width:1px;height:24px;background:#8ea3ab;"></div>
<div style="left:911px;top:982px;width:1px;height:24px;background:#8ea3ab;"></div>
<div style="left:988px;top:982px;width:1px;height:24px;background:#8ea3ab;"></div>
<div style="left:1065px;top:982px;width:1px;height:24px;background:#8ea3ab;"></div>
<div style="left:1142px;top:982px;width:1px;height:24px;background:#8ea3ab;"></div>
<div style="left:1219px;top:982px;width:1px;height:24px;background:#8ea3ab;"></div>
<div style="left:1296px;top:982px;width:1px;height:24px;background:#8ea3ab;"></div>
<div style="left:1373px;top:982px;width:1px;height:24px;background:#8ea3ab;"></div>
<div style="left:1450px;top:982px;width:1px;height:24px;background:#8ea3ab;"></div>
<div style="left:1527px;top:982px;width:1px;height:24px;background:#8ea3ab;"></div>
<div style="left:1604px;top:982px;width:1px;height:24px;background:#8ea3ab;"></div>
<div style="left:1681px;top:982px;width:1px;height:24px;background:#8ea3ab;"></div>
<div style="left:1758px;top:982px;width:1px;height:24px;background:#8ea3ab;"></div>
<div style="left:1835px;top:982px;width:1px;height:24px;background:#8ea3ab;"></div>
<div style="left:289px;top:1006px;width:1547px;height:1px;background:#6f909a;"></div>
<div style="left:290px;top:984px;width:30px;height:20px;border:1px solid #bfe0fb;border-radius:0 9px 9px 0;background:rgba(240,248,255,0.6);box-sizing:border-box"></div>
<div style="left:1804px;top:984px;width:30px;height:20px;border:1px solid #bfe0fb;border-radius:10px 0 0 10px;background:rgba(240,248,255,0.5);box-sizing:border-box"></div>
<div style="left:289px;top:1007px;width:1547px;height:25px;background:linear-gradient(to right,#bdd6de -1px,#bdd6de 6px,#add8e6 6px,#add8e6 59px,#bdd6de 59px,#bdd6de 76px,#bdd6de 84px,#add8e6 84px,#add8e6 137px,#bdd6de 137px,#bdd6de 154px,#bdd6de 162px,#add8e6 162px,#add8e6 215px,#bdd6de 215px,#bdd6de 232px,#bdd6de 240px,#add8e6 240px,#add8e6 293px,#bdd6de 293px,#bdd6de 310px,#bdd6de 318px,#add8e6 318px,#add8e6 371px,#bdd6de 371px,#bdd6de 388px,#bdd6de 396px,#add8e6 396px,#add8e6 449px,#bdd6de 449px,#bdd6de 466px,#bdd6de 474px,#add8e6 474px,#add8e6 527px,#bdd6de 527px,#bdd6de 544px,#bdd6de 552px,#add8e6 552px,#add8e6 605px,#bdd6de 605px,#bdd6de 622px,#bdd6de 630px,#add8e6 630px,#add8e6 683px,#bdd6de 683px,#bdd6de 699px,#bdd6de 707px,#add8e6 707px,#add8e6 760px,#bdd6de 760px,#bdd6de 776px,#bdd6de 784px,#add8e6 784px,#add8e6 837px,#bdd6de 837px,#bdd6de 853px,#bdd6de 861px,#add8e6 861px,#add8e6 914px,#bdd6de 914px,#bdd6de 930px,#bdd6de 938px,#add8e6 938px,#add8e6 991px,#bdd6de 991px,#bdd6de 1007px,#bdd6de 1015px,#add8e6 1015px,#add8e6 1068px,#bdd6de 1068px,#bdd6de 1084px,#bdd6de 1092px,#add8e6 1092px,#add8e6 1145px,#bdd6de 1145px,#bdd6de 1161px,#bdd6de 1169px,#add8e6 1169px,#add8e6 1222px,#bdd6de 1222px,#bdd6de 1238px,#bdd6de 1246px,#add8e6 1246px,#add8e6 1299px,#bdd6de 1299px,#bdd6de 1315px,#bdd6de 1323px,#add8e6 1323px,#add8e6 1376px,#bdd6de 1376px,#bdd6de 1392px,#bdd6de 1400px,#add8e6 1400px,#add8e6 1453px,#bdd6de 1453px,#bdd6de 1469px,#bdd6de 1477px,#add8e6 1477px,#add8e6 1530px,#bdd6de 1530px,#bdd6de 1547px);"></div>
<div style="left:290px;top:1009px;width:30px;height:20px;border:1px solid #8ccbdd;border-radius:0 9px 9px 0;background:rgba(255,255,255,0.1);box-sizing:border-box"></div>
<div style="left:1804px;top:1009px;width:30px;height:20px;border:1px solid #8ccbdd;border-right:1px solid #8ccbdd;border-radius:10px 0 0 10px;background:rgba(255,255,255,0.1);box-sizing:border-box"></div>
<div style="left:1066px;top:452px;width:77px;height:25px;background:rgba(205,232,250,0.55);"></div>
<div style="left:678px;top:477px;width:297px;height:30px;background:#ffa500;overflow:hidden"><div style="position:absolute;left:1px;top:1px;width:9px;height:28px;background:#fff"></div><div style="left:0;top:0;width:292px;height:30px;overflow:hidden"><span class="t" style="left:13.5px;top:5.72px;font-size:13.5px;font-weight:bold;color:#3a3a3a;letter-spacing:0px">1: Toilet, PEH</span></div></div>
<div style="left:996px;top:477px;width:70px;height:30px;background:#40e0d0;overflow:hidden"><div style="position:absolute;left:1px;top:1px;width:9px;height:28px;background:#fff"></div><div style="left:0;top:0;width:65px;height:30px;overflow:hidden"><span class="t" style="left:13.5px;top:5.72px;font-size:13.5px;font-weight:bold;color:#3a3a3a;letter-spacing:0px">11: Bad,</span></div></div>
<div style="left:289px;top:542px;width:777px;height:30px;background:#40e0d0;overflow:hidden"><div style="position:absolute;left:0px;top:1px;width:9px;height:28px;background:#fff"></div><div style="left:0;top:0;width:772px;height:30px;overflow:hidden"><span class="t" style="left:12px;top:5.72px;font-size:13.5px;font-weight:bold;color:#3a3a3a;letter-spacing:0px">30: Cement til ny bygning, super</span></div></div>
<div style="left:289px;top:607px;width:1316px;height:30px;background:#40e0d0;overflow:hidden"><div style="position:absolute;left:0px;top:1px;width:9px;height:28px;background:#fff"></div><div style="left:0;top:0;width:1311px;height:30px;overflow:hidden"><span class="t" style="left:12px;top:5.72px;font-size:13.5px;font-weight:bold;color:#3a3a3a;letter-spacing:0px">20: Cement, KIS</span></div></div>
<div style="left:289px;top:672px;width:63px;height:30px;background:#ffa500;overflow:hidden"><div style="position:absolute;left:0px;top:1px;width:9px;height:28px;background:#fff"></div><div style="left:0;top:0;width:58px;height:30px;overflow:hidden"><span class="t" style="left:12px;top:5.72px;font-size:13.5px;font-weight:bold;color:#3a3a3a;letter-spacing:0px">20: Ops</span></div></div>
<div style="left:289px;top:702px;width:1547px;height:30px;background:#40e0d0;overflow:hidden"><div style="position:absolute;left:0px;top:1px;width:9px;height:28px;background:#fff"></div><div style="left:0;top:0;width:1542px;height:30px;overflow:hidden"><span class="t" style="left:12px;top:5.72px;font-size:13.5px;font-weight:bold;color:#3a3a3a;letter-spacing:0px">30: Murerfirma, PEB</span></div></div>
<div style="left:678px;top:767px;width:234px;height:30px;background:#ffa500;overflow:hidden"><div style="position:absolute;left:1px;top:1px;width:9px;height:28px;background:#fff"></div><div style="left:0;top:0;width:229px;height:30px;overflow:hidden"><span class="t" style="left:13.5px;top:5.72px;font-size:13.5px;font-weight:bold;color:#3a3a3a;letter-spacing:0px">10: Vej 1, super</span></div></div>
<div style="left:1836px;top:452px;width:22px;height:601px;background:#f7f7f7;"></div>
<div style="left:1838px;top:453px;width:19px;height:19px;background:#adc9cf;border:1.5px solid #2f6676;box-sizing:border-box;"></div>
<svg style="position:absolute;left:1842.5px;top:459.0px;" width="10" height="6" viewBox="0 0 10 6"><path d="M0 5.5 H10 L5 0 Z" fill="#333"/></svg>
<div style="left:1838px;top:473px;width:19px;height:298px;background:#adc9cf;border:1.5px solid #2f6676;box-sizing:border-box;"></div>
<div style="left:1838px;top:882px;width:19px;height:19px;background:#adc9cf;border:1.5px solid #2f6676;box-sizing:border-box;"></div>
<svg style="position:absolute;left:1842.5px;top:889.0px;" width="10" height="6" viewBox="0 0 10 6"><path d="M0 0 H10 L5 5.5 Z" fill="#333"/></svg>
<div style="left:1838px;top:902px;width:20px;height:1px;background:#2f6676;"></div>
<div style="left:1838px;top:902px;width:1px;height:152px;background:#2f6676;"></div>
<svg style="position:absolute;left:1844px;top:910.3px;" width="10" height="12" viewBox="0 0 10 12"><rect x="0" y="0" width="10" height="1.2" fill="#b5b5b5"/><path d="M0 7 H10 L5 2.5Z M0 11 H10 L5 6.5Z" fill="#b5b5b5"/></svg>
<svg style="position:absolute;left:1844px;top:935.1px;" width="10" height="12" viewBox="0 0 10 12"><path d="M0 6 H10 L5 1.5Z M0 10 H10 L5 5.5Z" fill="#b5b5b5"/></svg>
<svg style="position:absolute;left:1844px;top:960.5px;" width="10" height="12" viewBox="0 0 10 12"><path d="M0 8 H10 L5 3.5Z" fill="#b5b5b5"/></svg>
<svg style="position:absolute;left:1844px;top:985.5px;" width="10" height="12" viewBox="0 0 10 12"><path d="M0 3.5 H10 L5 8Z" fill="#404040"/></svg>
<svg style="position:absolute;left:1844px;top:1010.1px;" width="10" height="12" viewBox="0 0 10 12"><path d="M0 1.5 H10 L5 6Z M0 5.5 H10 L5 10Z" fill="#404040"/></svg>
<svg style="position:absolute;left:1844px;top:1035.2px;" width="10" height="12" viewBox="0 0 10 12"><path d="M0 0.5 H10 L5 5Z M0 4.5 H10 L5 9Z" fill="#404040"/><rect x="0" y="10" width="10" height="1.2" fill="#404040"/></svg>
<div style="left:289px;top:1032px;width:1547px;height:21px;background:#f7f7f7;"></div>
<div style="left:289px;top:1033px;width:19px;height:19px;background:#adc9cf;border:1.5px solid #2f6676;box-sizing:border-box;"></div>
<svg style="position:absolute;left:295.0px;top:1037.5px;" width="6" height="10" viewBox="0 0 6 10"><path d="M5.5 0 V10 L0 5 Z" fill="#333"/></svg>
<div style="left:937px;top:1033px;width:251px;height:19px;background:#adc9cf;border:1.5px solid #2f6676;box-sizing:border-box;"></div>
<div style="left:1817px;top:1033px;width:19px;height:19px;background:#adc9cf;border:1.5px solid #2f6676;box-sizing:border-box;"></div>
<svg style="position:absolute;left:1824.0px;top:1037.5px;" width="6" height="10" viewBox="0 0 6 10"><path d="M0 0 V10 L5.5 5 Z" fill="#333"/></svg>
<div style="left:276px;top:1053px;width:1582px;height:1px;background:#2f6676;"></div>
</body></html>
